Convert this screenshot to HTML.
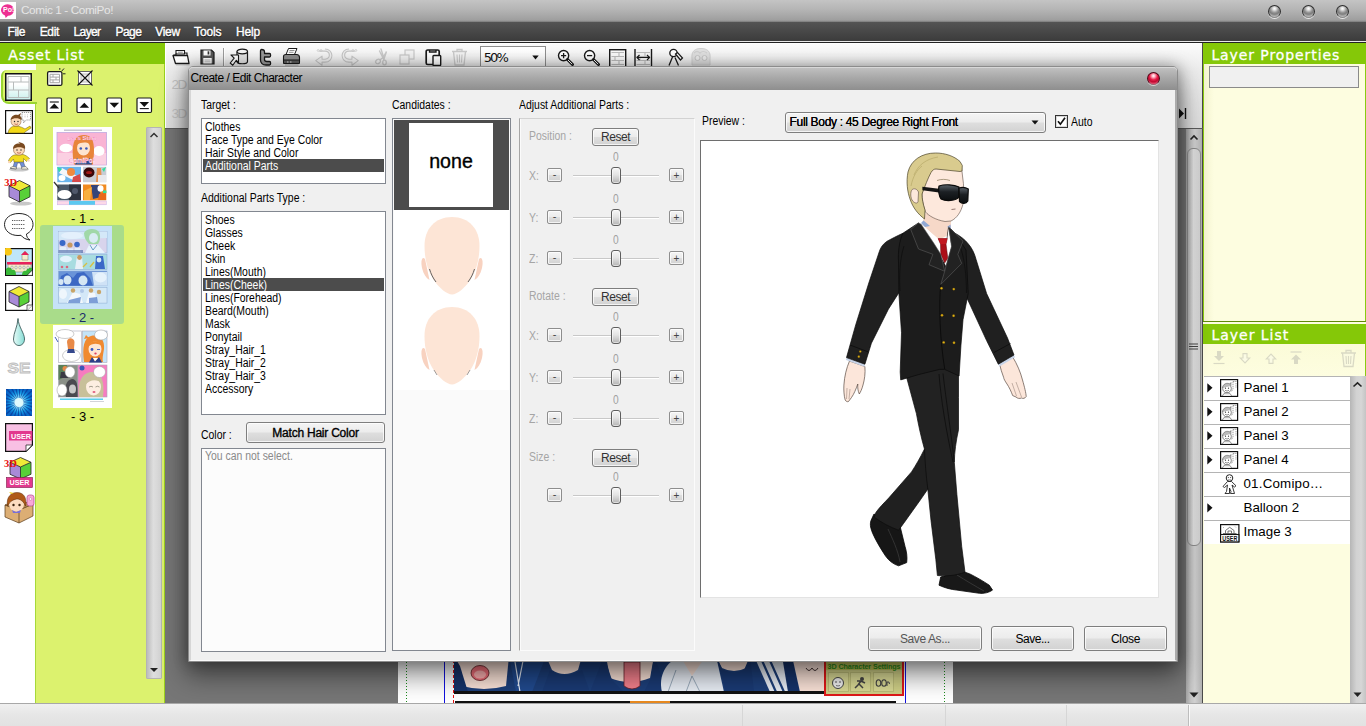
<!DOCTYPE html>
<html lang="en"><head><meta charset="utf-8"><title>Comic 1 - ComiPo!</title>
<style>
html,body{margin:0;padding:0}
body{width:1366px;height:726px;overflow:hidden;position:relative;background:#808080;font-family:"Liberation Sans",sans-serif}
div,span.t,svg.a{position:absolute;box-sizing:border-box}
span.t{white-space:pre;display:block}
.btn{border:1px solid #7e7e7e;border-radius:3px;background:linear-gradient(#f4f4f4 0%,#ececec 48%,#dedede 52%,#d2d2d2 100%);box-shadow:inset 0 0 0 1px rgba(255,255,255,.75)}
.lb{border:1px solid #828790;background:#fff}

</style></head>
<body>
<div style="left:0px;top:0px;width:1366px;height:22px;background:linear-gradient(#c4c4c4,#b4b4b4 45%,#9e9e9e 92%,#7a7a7a)"></div>
<div style="left:0px;top:2px;width:16px;height:17px;background:#fff"></div>
<svg class="a" style="left:0;top:2px" width="16" height="17" viewBox="0 0 17 18"><ellipse cx="8" cy="8.5" rx="7" ry="6.2" fill="#ee2f92"/><path d="M5 13 L6 17 L9 14Z" fill="#ee2f92"/><text x="3.2" y="11" font-family="Liberation Sans,sans-serif" font-size="7.5" font-weight="bold" fill="#fff">Po!</text></svg>
<span class="t" style="left:21px;top:4.91px;font:normal 11.8px 'Liberation Sans',sans-serif;line-height:1;color:#e6e6e6;letter-spacing:-0.411px;">Comic 1 - ComiPo!</span>
<div style="left:1268px;top:5px;width:13px;height:13px;border-radius:50%;background:radial-gradient(circle at 50% 24%,#fff 0%,#e4e4e4 14%,#9a9a9a 38%,#7c7c7c 55%,#b8b8b8 78%,#4a4a4a 100%);border:1px solid #2e2e2e;border-bottom-color:#8a8a8a;box-shadow:0 1px 0 rgba(255,255,255,.75)"></div>
<div style="left:1302px;top:5px;width:13px;height:13px;border-radius:50%;background:radial-gradient(circle at 50% 24%,#fff 0%,#e4e4e4 14%,#9a9a9a 38%,#7c7c7c 55%,#b8b8b8 78%,#4a4a4a 100%);border:1px solid #2e2e2e;border-bottom-color:#8a8a8a;box-shadow:0 1px 0 rgba(255,255,255,.75)"></div>
<div style="left:1336px;top:5px;width:13px;height:13px;border-radius:50%;background:radial-gradient(circle at 50% 24%,#fff 0%,#e4e4e4 14%,#9a9a9a 38%,#7c7c7c 55%,#b8b8b8 78%,#4a4a4a 100%);border:1px solid #2e2e2e;border-bottom-color:#8a8a8a;box-shadow:0 1px 0 rgba(255,255,255,.75)"></div>
<div style="left:0px;top:22px;width:1366px;height:20px;background:linear-gradient(#545454 0%,#474747 50%,#3a3a3a 100%)"></div>
<div style="left:0px;top:41px;width:1366px;height:2px;background:linear-gradient(#e8e8e8,#e8e8e8 50%,#222 50%)"></div>
<span class="t" style="left:7.6px;top:25.84px;font:normal 12px 'Liberation Sans',sans-serif;line-height:1;color:#fff;letter-spacing:-0.486px;-webkit-text-stroke:.4px #fff;text-shadow:0 1px 1px #000;">File</span>
<span class="t" style="left:39.7px;top:25.84px;font:normal 12px 'Liberation Sans',sans-serif;line-height:1;color:#fff;letter-spacing:-0.322px;-webkit-text-stroke:.4px #fff;text-shadow:0 1px 1px #000;">Edit</span>
<span class="t" style="left:73.5px;top:25.84px;font:normal 12px 'Liberation Sans',sans-serif;line-height:1;color:#fff;letter-spacing:-0.606px;-webkit-text-stroke:.4px #fff;text-shadow:0 1px 1px #000;">Layer</span>
<span class="t" style="left:115.5px;top:25.84px;font:normal 12px 'Liberation Sans',sans-serif;line-height:1;color:#fff;letter-spacing:-0.558px;-webkit-text-stroke:.4px #fff;text-shadow:0 1px 1px #000;">Page</span>
<span class="t" style="left:155.3px;top:25.84px;font:normal 12px 'Liberation Sans',sans-serif;line-height:1;color:#fff;letter-spacing:-0.324px;-webkit-text-stroke:.4px #fff;text-shadow:0 1px 1px #000;">View</span>
<span class="t" style="left:194px;top:25.84px;font:normal 12px 'Liberation Sans',sans-serif;line-height:1;color:#fff;letter-spacing:-0.103px;-webkit-text-stroke:.4px #fff;text-shadow:0 1px 1px #000;">Tools</span>
<span class="t" style="left:236px;top:25.84px;font:normal 12px 'Liberation Sans',sans-serif;line-height:1;color:#fff;letter-spacing:-0.172px;-webkit-text-stroke:.4px #fff;text-shadow:0 1px 1px #000;">Help</span>
<div style="left:0px;top:703px;width:1366px;height:23px;background:linear-gradient(#f0f0f0,#e6e6e6 50%,#e2e2e2);border-top:1px solid #a8a8a8"></div>
<div style="left:742px;top:705px;width:1px;height:21px;background:#d6d6d6"></div>
<div style="left:945px;top:705px;width:1px;height:21px;background:#d6d6d6"></div>
<div style="left:1066px;top:705px;width:1px;height:21px;background:#d6d6d6"></div>
<div style="left:1188px;top:705px;width:2px;height:21px;background:#fafafa;border-left:1px solid #bdbdbd"></div>
<div style="left:0px;top:43px;width:165px;height:660px;background:#dcf26e;border-left:1px solid #8acb10;border-right:1px solid #9bd11c"></div>
<div style="left:0px;top:43px;width:165px;height:21px;background:#85c808"></div>
<span class="t" style="left:8.3px;top:48.15px;font:normal 14px 'DejaVu Sans','Liberation Sans',sans-serif;line-height:1;color:#fff;letter-spacing:0.930px;-webkit-text-stroke:.3px #fff;">Asset List</span>
<div style="left:0px;top:64px;width:36px;height:639px;background:#fff"></div>
<div style="left:35px;top:104px;width:1px;height:599px;background:#a6d93a"></div>
<div style="left:1px;top:70px;width:36px;height:34px;background:#dcf26e;border-left:2px solid #9ad531;border-bottom:2px solid #9ad531;border-radius:6px 0 0 8px"></div>
<svg class="a" style="left:5px;top:73px" width="27" height="28" viewBox="0 0 27 28"><defs><linearGradient id="gpl" x1="0" y1="0" x2="0" y2="1"><stop offset=".4" stop-color="#fff"/><stop offset="1" stop-color="#c8f0ec"/></linearGradient></defs><rect x=".75" y=".75" width="25.5" height="26.5" fill="url(#gpl)" stroke="#111" stroke-width="1.5"/><path d="M3 3.5 H24 V24.5 H3Z M3 9 H24 M3 17 H24 M16 3.5 V9 M8.5 9 V17 M13.5 17 V24.5" fill="none" stroke="#b8bcbc" stroke-width="1"/></svg>
<svg class="a" style="left:5px;top:110px" width="28" height="24" viewBox="0 0 28 24"><rect x=".6" y=".6" width="26.8" height="22.8" fill="#fff" stroke="#111" stroke-width="1.2"/><path d="M3 23 C4 17 8 16 11 16 C15 16 18 18 20 19 L25 16 L26 18 L20 22 L19 23Z" fill="#f2d818" stroke="#6a5a10" stroke-width=".5"/><ellipse cx="11" cy="11.5" rx="5" ry="4.8" fill="#fbd9b8" stroke="#7a5030" stroke-width=".5"/><path d="M5.5 10 C6 5 11 4 13 5 L16 3 L15 6 C17 7 17 9 16.5 10 C14 8 9 7.5 5.5 10Z" fill="#7a4a20"/><circle cx="9.5" cy="11.5" r=".7" fill="#222"/><circle cx="13" cy="11.5" r=".7" fill="#222"/><path d="M9.5 13.8 Q11.3 15.2 13 13.8" stroke="#a03020" stroke-width=".6" fill="none"/><path d="M17 2.5 H25.5 V10 H21 L18.5 13 L19 10 H17Z" fill="#fff" stroke="#555" stroke-width=".6" stroke-dasharray="1.2 .8"/><path d="M20 4.5 V8 M22.5 4.5 V8" stroke="#999" stroke-width=".6" stroke-dasharray=".8 .8"/></svg>
<svg class="a" style="left:7px;top:141px" width="24" height="31" viewBox="0 0 24 31"><ellipse cx="12" cy="28.5" rx="10" ry="2" fill="#c8c8c8"/><path d="M8 19 L6 26 L3.5 27.5 L9 28 L10.5 22 L13 22 L15 27.5 L20.5 27.5 L18 25.5 L15.5 18Z" fill="#7090d8" stroke="#334" stroke-width=".4"/><path d="M3 27 L9.5 28 L9 26 L5.5 25.5Z M14.5 28 L21 28 L19 25.5 L15 26Z" fill="#f4f0e4" stroke="#443" stroke-width=".4"/><path d="M7 14 C4 15 2 18 1.5 20 L3.5 21.5 L6.5 18 L7 21 L16.5 21 L16.5 17.5 L19.5 20.5 L22.5 17.5 C20 15 18 14 16 13.5Z" fill="#f0dc20" stroke="#6a5a10" stroke-width=".5"/><ellipse cx="12" cy="9" rx="5.5" ry="5.2" fill="#fbd9b8" stroke="#7a5030" stroke-width=".5"/><path d="M6 8 C6 3 10 2 13 2.5 L11 .8 L15 2 C18 3 18.5 6 18 8 C15 5.5 9.5 5.5 6 8Z" fill="#7a4a20"/><circle cx="10" cy="9" r=".7" fill="#222"/><circle cx="14" cy="9" r=".7" fill="#222"/><path d="M10 11.5 Q12 13 14 11.5" stroke="#a03020" stroke-width=".6" fill="none"/><circle cx="2.2" cy="21" r="1.3" fill="#fbd9b8"/><circle cx="21.5" cy="19.5" r="1.3" fill="#fbd9b8"/></svg>
<svg class="a" style="left:3px;top:176px" width="32" height="30" viewBox="0 0 32 30"><ellipse cx="18" cy="27.5" rx="11" ry="2" fill="#c8c8c8"/><path d="M6 9.75 L16.5 4.5 L27 9.75 L16.5 15.0Z" fill="#f0ea38"/><path d="M6 9.75 L16.5 15.0 L16.5 26.0 L6 20.75Z" fill="#a88ad8"/><path d="M27 9.75 L16.5 15.0 L16.5 26.0 L27 20.75Z" fill="#58d038"/><path d="M6 9.75 L16.5 4.5 L27 9.75 L27 20.75 L16.5 26.0 L6 20.75Z M6 9.75 L16.5 15.0 L27 9.75 M16.5 15.0 V26.0" fill="none" stroke="#222" stroke-width=".8" stroke-linejoin="round"/><text x="1.2" y="10" font-family="Liberation Serif,serif" font-weight="bold" font-size="10.5" fill="#e81010">3D</text></svg>
<svg class="a" style="left:3px;top:212px" width="32" height="30" viewBox="0 0 32 30"><path d="M16 1.5 C7 1.5 1.5 6.5 1.5 12.5 C1.5 18.5 7 23.5 15 23.5 L18 23.3 C20 26 23 27.5 27 28 C24.5 26.5 23.5 24.5 23.5 22 C27.5 20 30 16.5 30 12.5 C30 6.5 25 1.5 16 1.5Z" fill="#fff" stroke="#222" stroke-width="1"/><path d="M9 8.5 H22 M9 12.5 H22 M9 16.5 H22" stroke="#555" stroke-width="1" stroke-dasharray="1 .8"/></svg>
<svg class="a" style="left:5px;top:248px" width="28" height="28" viewBox="0 0 28 28"><rect x=".6" y=".6" width="26.8" height="26.8" fill="#bfe6fa" stroke="#111" stroke-width="1.2"/><circle cx="3" cy="3.5" r="4" fill="#f8c818"/><path d="M15 12 H25 V17 H15Z" fill="#f4eccc"/><path d="M17 6 L20 3 L23 6 V12 H17Z" fill="#f4eccc" stroke="#554" stroke-width=".4"/><path d="M16 7 L20 3.2 L24 7Z" fill="#e8205a"/><path d="M3 16 H26 V24 H3Z" fill="#f4eccc" stroke="#554" stroke-width=".4"/><path d="M2 14 H27 V16.5 H2Z" fill="#e8205a"/><path d="M1 27 V21 C3 19 6 19 7 22 C9 21 11 22 11 27Z M27 27 V20 C24 19 22 20 21 23 C19 22 17 24 17 27Z" fill="#38b838"/><g fill="#fff" stroke="#555" stroke-width=".4"><rect x="6" y="18" width="2" height="3" rx="1"/><rect x="10" y="18" width="2" height="3" rx="1"/><rect x="14" y="18" width="2" height="3" rx="1"/><rect x="18" y="18" width="2" height="3" rx="1"/><rect x="22" y="18" width="2" height="3" rx="1"/></g><path d="M22 27.4 L27.4 22 V27.4Z" fill="#fff" stroke="#111" stroke-width=".6"/></svg>
<svg class="a" style="left:5px;top:283px" width="28" height="28" viewBox="0 0 28 28"><rect x=".6" y=".6" width="26.8" height="26.8" fill="#fff" stroke="#111" stroke-width="1.2"/><path d="M4 8.5 L14.0 3.5 L24 8.5 L14.0 13.5Z" fill="#f0ea38"/><path d="M4 8.5 L14.0 13.5 L14.0 24.0 L4 19.0Z" fill="#a88ad8"/><path d="M24 8.5 L14.0 13.5 L14.0 24.0 L24 19.0Z" fill="#58d038"/><path d="M4 8.5 L14.0 3.5 L24 8.5 L24 19.0 L14.0 24.0 L4 19.0Z M4 8.5 L14.0 13.5 L24 8.5 M14.0 13.5 V24.0" fill="none" stroke="#222" stroke-width=".8" stroke-linejoin="round"/><path d="M22 27.4 L27.4 22 V27.4Z" fill="#fff" stroke="#111" stroke-width=".6"/><path d="M22 27.4 V22 H27.4" fill="#eee" stroke="#111" stroke-width=".6"/></svg>
<svg class="a" style="left:12px;top:318px" width="14" height="28" viewBox="0 0 14 28"><defs><linearGradient id="gdr" x1="0" y1="0" x2="1" y2="0"><stop offset="0" stop-color="#e8fbf8"/><stop offset="1" stop-color="#86dcd4"/></linearGradient></defs><path d="M6 .5 C6.5 9 12.5 15 12.5 21 C12.5 25 10 27.5 7 27.5 C4 27.5 1.5 25 1.5 21 C1.5 15 5.5 9 6 .5Z" fill="url(#gdr)" stroke="#2a4a4a" stroke-width=".8"/></svg>
<svg class="a" style="left:6px;top:358px" width="26" height="18" viewBox="0 0 26 18"><text x="1.5" y="15" font-family="Liberation Sans,sans-serif" font-weight="bold" font-size="15.5" fill="#e6e6e6" stroke="#c0c0c0" stroke-width=".9" textLength="23" lengthAdjust="spacingAndGlyphs">SE</text></svg>
<svg class="a" style="left:6px;top:389px" width="26" height="27" viewBox="0 0 26 27"><defs><radialGradient id="gfl"><stop offset="0" stop-color="#fff"/><stop offset=".3" stop-color="#a8f0ff"/><stop offset=".7" stop-color="#18a0e8"/><stop offset="1" stop-color="#0868c8"/></radialGradient><clipPath id="cfl"><rect width="26" height="27"/></clipPath></defs><rect width="26" height="27" fill="url(#gfl)"/><g clip-path="url(#cfl)" opacity=".75"><path d="M13 13.5 L43.0 13.5 L42.9 16.5Z" fill="#0a3a9a"/><path d="M13 13.5 L42.0 21.3 L41.1 24.1Z" fill="#0a3a9a"/><path d="M13 13.5 L39.0 28.5 L37.4 31.0Z" fill="#0a3a9a"/><path d="M13 13.5 L34.2 34.7 L32.0 36.7Z" fill="#0a3a9a"/><path d="M13 13.5 L28.0 39.5 L25.3 40.8Z" fill="#0a3a9a"/><path d="M13 13.5 L20.8 42.5 L17.8 43.1Z" fill="#0a3a9a"/><path d="M13 13.5 L13.0 43.5 L10.0 43.4Z" fill="#0a3a9a"/><path d="M13 13.5 L5.2 42.5 L2.4 41.6Z" fill="#0a3a9a"/><path d="M13 13.5 L-2.0 39.5 L-4.5 37.9Z" fill="#0a3a9a"/><path d="M13 13.5 L-8.2 34.7 L-10.2 32.5Z" fill="#0a3a9a"/><path d="M13 13.5 L-13.0 28.5 L-14.3 25.8Z" fill="#0a3a9a"/><path d="M13 13.5 L-16.0 21.3 L-16.6 18.3Z" fill="#0a3a9a"/><path d="M13 13.5 L-17.0 13.5 L-16.9 10.5Z" fill="#0a3a9a"/><path d="M13 13.5 L-16.0 5.7 L-15.1 2.9Z" fill="#0a3a9a"/><path d="M13 13.5 L-13.0 -1.5 L-11.4 -4.0Z" fill="#0a3a9a"/><path d="M13 13.5 L-8.2 -7.7 L-6.0 -9.7Z" fill="#0a3a9a"/><path d="M13 13.5 L-2.0 -12.5 L0.7 -13.8Z" fill="#0a3a9a"/><path d="M13 13.5 L5.2 -15.5 L8.2 -16.1Z" fill="#0a3a9a"/><path d="M13 13.5 L13.0 -16.5 L16.0 -16.4Z" fill="#0a3a9a"/><path d="M13 13.5 L20.8 -15.5 L23.6 -14.6Z" fill="#0a3a9a"/><path d="M13 13.5 L28.0 -12.5 L30.5 -10.9Z" fill="#0a3a9a"/><path d="M13 13.5 L34.2 -7.7 L36.2 -5.5Z" fill="#0a3a9a"/><path d="M13 13.5 L39.0 -1.5 L40.3 1.2Z" fill="#0a3a9a"/><path d="M13 13.5 L42.0 5.7 L42.6 8.7Z" fill="#0a3a9a"/></g><circle cx="13" cy="13.5" r="4.5" fill="#e8ffff" opacity=".9"/></svg>
<svg class="a" style="left:5px;top:423px" width="28" height="29" viewBox="0 0 28 29"><path d="M.6 .6 H27.4 V22 L21 28.4 H.6Z" fill="#f8c0e4" stroke="#111" stroke-width="1.2"/><path d="M21 28.4 V22 H27.4Z" fill="#fff" stroke="#111" stroke-width=".7"/><rect x="4" y="8" width="23.4" height="9.5" fill="#e2388e"/><text x="6" y="15.6" font-family="Liberation Sans,sans-serif" font-weight="bold" font-size="8" fill="#fff" textLength="20" lengthAdjust="spacingAndGlyphs">USER</text></svg>
<svg class="a" style="left:3px;top:455px" width="32" height="34" viewBox="0 0 32 34"><path d="M7 7.25 L17.5 2.5 L28 7.25 L17.5 12.0Z" fill="#f0ea38"/><path d="M7 7.25 L17.5 12.0 L17.5 24.0 L7 19.25Z" fill="#a88ad8"/><path d="M28 7.25 L17.5 12.0 L17.5 24.0 L28 19.25Z" fill="#58d038"/><path d="M7 7.25 L17.5 2.5 L28 7.25 L28 19.25 L17.5 24.0 L7 19.25Z M7 7.25 L17.5 12.0 L28 7.25 M17.5 12.0 V24.0" fill="none" stroke="#222" stroke-width=".8" stroke-linejoin="round"/><rect x="3.5" y="22.5" width="26" height="10" fill="#e2388e"/><text x="6.5" y="30.4" font-family="Liberation Sans,sans-serif" font-weight="bold" font-size="8" fill="#fff" textLength="20" lengthAdjust="spacingAndGlyphs">USER</text><rect x="3.5" y="22.5" width="26" height="10" fill="none" stroke="#7a1848" stroke-width=".6"/><text x="1" y="11.5" font-family="Liberation Serif,serif" font-weight="bold" font-size="10.5" fill="#e81010">3D</text></svg>
<svg class="a" style="left:3px;top:491px" width="32" height="33" viewBox="0 0 32 33"><path d="M2 14 L16 19 L30 13 L30 25 L16 32 L2 26Z" fill="#dcae74" stroke="#5a3a18" stroke-width=".7"/><path d="M16 19 V32" stroke="#5a3a18" stroke-width=".7"/><path d="M2 14 L14 9 L30 13 L16 19Z" fill="#b88850" stroke="#5a3a18" stroke-width=".6"/><ellipse cx="13.5" cy="13.5" rx="7.5" ry="7" fill="#fbdcc0"/><path d="M4.500 15 C3 6 8 1.500 14 1.500 C21 1.500 24 7 22.500 15 C21 11 18 8.500 15 8 C11 8 7 10 4.500 15Z" fill="#b05a18" stroke="#5a2a08" stroke-width=".5"/><path d="M8 3 L6 1 L11 2Z" fill="#f0d020"/><circle cx="10.5" cy="14" r="1.2" fill="#3a2410"/><circle cx="16.5" cy="14" r="1.2" fill="#3a2410"/><path d="M9 19 L13 21 L18 19 L17 22 L10 22Z" fill="#7a70d8"/><rect x="24" y="4" width="7" height="11" rx="2.5" fill="#f8a8d8" stroke="#b04890" stroke-width=".7"/><circle cx="27.5" cy="8" r="1.3" fill="#fff" stroke="#b04890" stroke-width=".4"/></svg>
<svg class="a" style="left:46px;top:66px" width="22" height="21" viewBox="0 0 22 21"><rect x="1.600" y="5.600" width="14.300" height="13.800" rx="1.500" fill="#fff" stroke="#1a1a1a" stroke-width="1.300"/><path d="M4 8.300 H13.500 V16.700 H4Z M4 11.100 H13.500 M4 13.900 H13.500 M7 8.300 V11.100 M10 11.100 V13.900 M7 13.900 V16.700" fill="none" stroke="#a8a8a8" stroke-width="1"/><path d="M15.800 5 L18 2.500 M17 7.800 L19.500 7.800 M13.800 3.800 L13.800 2" stroke="#222" stroke-width="1"/></svg>
<svg class="a" style="left:76px;top:69px" width="18" height="18" viewBox="0 0 18 18"><rect x="2.500" y="2.500" width="13" height="13" fill="#fff" stroke="#666" stroke-width="1"/><rect x="5" y="5" width="8" height="8" fill="#eee" stroke="#aaa" stroke-width=".8"/><path d="M1.500 1.500 L16.500 16.500 M16.500 1.500 L1.500 16.500" stroke="#111" stroke-width="1.100"/></svg>
<svg class="a" style="left:46px;top:97px" width="17" height="17" viewBox="0 0 17 17"><rect x="1" y="1" width="14.500" height="14.500" rx="1.200" fill="#fff" stroke="#1a1a1a" stroke-width="1.200"/><path transform="translate(.3,.3)" d="M3.500 4.700 H12.500" stroke="#111" stroke-width="1.100"/><path transform="translate(.3,.3)" d="M3.200 11.300 L8 6.300 L12.800 11.300Z" fill="#111"/></svg>
<svg class="a" style="left:76px;top:97px" width="17" height="17" viewBox="0 0 17 17"><rect x="1" y="1" width="14.500" height="14.500" rx="1.200" fill="#fff" stroke="#1a1a1a" stroke-width="1.200"/><path transform="translate(.3,.3)" d="M3.200 10.500 L8 5.500 L12.800 10.500Z" fill="#111"/></svg>
<svg class="a" style="left:106px;top:97px" width="17" height="17" viewBox="0 0 17 17"><rect x="1" y="1" width="14.500" height="14.500" rx="1.200" fill="#fff" stroke="#1a1a1a" stroke-width="1.200"/><path transform="translate(.3,.3)" d="M3.200 5.500 L8 10.500 L12.800 5.500Z" fill="#111"/></svg>
<svg class="a" style="left:136px;top:97px" width="17" height="17" viewBox="0 0 17 17"><rect x="1" y="1" width="14.500" height="14.500" rx="1.200" fill="#fff" stroke="#1a1a1a" stroke-width="1.200"/><path transform="translate(.3,.3)" d="M3.500 11.300 H12.500" stroke="#111" stroke-width="1.100"/><path transform="translate(.3,.3)" d="M3.200 4.700 L8 9.700 L12.800 4.700Z" fill="#111"/></svg>
<div style="left:146px;top:127px;width:16px;height:552px;background:linear-gradient(90deg,#bcbcbc,#dedede 45%,#d2d2d2);border:1px solid #b4b4b4;border-radius:1px"></div>
<svg class="a" style="left:148px;top:131px" width="12" height="8" viewBox="0 0 12 8"><path d="M2.500 6 L6 2.500 L9.500 6" fill="none" stroke="#333" stroke-width="1.500"/></svg>
<svg class="a" style="left:149px;top:667px" width="10" height="6" viewBox="0 0 10 6"><path d="M1 1 H9 L5 5Z" fill="#222"/></svg>
<svg class="a" style="left:53px;top:127px" width="59" height="83" viewBox="0 0 59 83"><rect width="59" height="83" fill="#fff"/><rect x="11" y="2.500" width="38" height="1.500" fill="#c8c8d0"/>
<rect x="4" y="5.500" width="49.500" height="32.500" fill="#f9b4d4" stroke="#c0a8e0" stroke-width=".8"/><rect x="4.400" y="26" width="48.700" height="11.600" fill="#fbd0e2"/>
<ellipse cx="13" cy="21" rx="6.500" ry="4.300" fill="#fff"/><ellipse cx="46" cy="24" rx="5.500" ry="5" fill="#fff"/>
<path d="M21 37.500 C19 28 19 16 23 11 C27 7 36 7 39 12 C42 18 41 28 40 37.500Z" fill="#e8853a"/><ellipse cx="30.500" cy="21" rx="6.500" ry="7.500" fill="#fde4d0"/><path d="M24 18 C26 12 34 11 37 17 C33 15 28 15 24 18Z" fill="#e8853a"/><circle cx="27.800" cy="21.500" r="1.300" fill="#3858b8"/><circle cx="33.400" cy="21.500" r="1.300" fill="#3858b8"/><path d="M24 31 L30.500 36 L37 31 L39 37.500 H22Z" fill="#2c4a8c"/>
<text x="28.700" y="13" text-anchor="middle" font-family="Liberation Sans,sans-serif" font-weight="bold" font-size="6" fill="#fff" stroke="#f36ab0" stroke-width=".25">Let's Start</text>
<text x="28.700" y="35.500" text-anchor="middle" font-family="Liberation Sans,sans-serif" font-weight="bold" font-size="6.400" fill="#f35aaa" stroke="#fff" stroke-width=".35">ComiPo!</text>
<rect x="4.300" y="39.800" width="23.700" height="15.400" fill="#6ab4ec"/><path d="M9 41 L26 50 L24 55 L6 46Z" fill="#f4f6fa"/><circle cx="18" cy="45" r="4" fill="#ee8a40"/><ellipse cx="9" cy="51" rx="3.500" ry="3" fill="#fff"/><path d="M20 50 L27 47 L28 55 L19 55Z" fill="#d84a4a"/>
<rect x="30" y="39.800" width="23.300" height="15.400" fill="#c8ccd4"/><ellipse cx="36" cy="45.500" rx="5.500" ry="5" fill="#3a0808"/><ellipse cx="36" cy="45.500" rx="3" ry="1.600" fill="#a01818"/><path d="M44 41 L48 41 L49 55 L43 55Z" fill="#e89050"/><rect x="45" y="48" width="8" height="7" fill="#e8e8ec"/>
<path d="M4 40 L9 42 L6 45Z M53 40 L49 42 L51 45Z" fill="#30e0a0"/>
<rect x="4.300" y="57.500" width="23.700" height="15.800" fill="#4a5868"/><path d="M16 57.500 H28 V73.300 H16Z" fill="#2e3440"/><circle cx="22" cy="64" r="3" fill="#50586a"/><ellipse cx="11.500" cy="67.500" rx="7" ry="4.500" fill="#fff"/><path d="M1 55 L6 61" stroke="#333" stroke-width="1.200"/>
<rect x="30" y="57.500" width="23.300" height="15.800" fill="#f08a20"/><path d="M38 58 L46 58 L48 70 L40 72Z" fill="#34447a"/><path d="M31 64 L39 60 L37 73 L31 73Z" fill="#f8b040"/><ellipse cx="47.500" cy="61.500" rx="3" ry="3.300" fill="#fff"/><path d="M46 67 L53 65 V73 H45Z" fill="#e86a18"/><rect x="50" y="63.500" width="3.500" height="2.600" fill="#30e0a0"/>
<rect x="4.300" y="74" width="49" height="3.800" fill="#fcd8e8" stroke="#c8b0e8" stroke-width=".5"/><rect x="16" y="74" width="26" height="3.800" fill="#5cc8f0"/></svg>
<span class="t" style="left:71.04px;top:211.50px;font:normal 13px 'Liberation Sans',sans-serif;line-height:1;color:#000;">- 1 -</span>
<div style="left:40px;top:225px;width:84px;height:99px;background:#a9dc8a;border-radius:3px"></div>
<svg class="a" style="left:53px;top:226px" width="59" height="83" viewBox="0 0 59 83"><rect width="59" height="83" fill="#c6e2f8"/>
<rect x="5.500" y="5.500" width="48.500" height="21.500" fill="#d8d4ec" stroke="#8aa8d0" stroke-width=".5"/><path d="M5.500 14 L54 12 V5.500 H5.500Z" fill="#d4e8f8"/><ellipse cx="19" cy="9.500" rx="11" ry="3.600" fill="#e4f0fc"/>
<path d="M31 7 C33 2 43 1.500 46 6 C48 10 47 15 45 18 L36 18 C33 15 31 11 31 7Z" fill="#a0d8a8"/><ellipse cx="40.500" cy="12" rx="4.500" ry="5" fill="#d8ecf4"/><path d="M32 27 L36 19 L45 19 L52 27Z" fill="#e8f2fc"/><path d="M37 19 L40 24 L44 19" fill="none" stroke="#4a88b8" stroke-width=".8"/>
<circle cx="9.500" cy="17" r="3" fill="#3a68c8"/><circle cx="17" cy="19" r="2.600" fill="#c89860"/><circle cx="24" cy="18.500" r="2.800" fill="#3a68c8"/><path d="M6 27 L7 21 H13 L14 27Z M14 27 L15 22.500 H20 L21 27Z M21 27 L22 22 H27 L28 27Z" fill="#e4eefa"/><path d="M5.500 24 H30 V27 H5.500Z" fill="#3a5a9c" opacity=".55"/>
<rect x="5.500" y="28.700" width="48.500" height="14.600" fill="#a8dce0" stroke="#8aa8d0" stroke-width=".5"/><ellipse cx="13" cy="33" rx="6" ry="3.200" fill="#e4f2fc"/><path d="M24 30 L29 30 L30 43 L22 43Z" fill="#e8f0f8"/><circle cx="26.500" cy="31.500" r="2.400" fill="#c89860"/><path d="M43 30 L50 30 L52 43 L42 43Z" fill="#3a68c8"/><circle cx="46" cy="34" r="2.400" fill="#d8ecf4"/><path d="M30 41 L34 37 M37 41 L41 36" stroke="#d8c040" stroke-width="1.300"/><circle cx="9" cy="41" r="1.300" fill="#d86880"/><circle cx="14" cy="41" r="1.300" fill="#d86880"/>
<rect x="5.500" y="45" width="48.500" height="14.800" fill="#6a94d8" stroke="#8aa8d0" stroke-width=".5"/><path d="M5.500 59.800 L8 50 L14 47 L20 52 L24 47 L31 46 L37 52 L40 59.800Z" fill="#3c68c4"/><ellipse cx="14.500" cy="54" rx="4" ry="4.500" fill="#d4e6f4"/><ellipse cx="30" cy="54.500" rx="4.500" ry="5" fill="#d4e6f4"/><ellipse cx="8" cy="56" rx="2.500" ry="3" fill="#d4e6f4"/><path d="M39 46 H54 V59.800 H41Z" fill="#cfe2f6"/><ellipse cx="47.500" cy="51.500" rx="6" ry="5" fill="#e6f2fc"/>
<rect x="5.500" y="61.300" width="48.500" height="15.800" fill="#d4e8f8" stroke="#8aa8d0" stroke-width=".5"/><ellipse cx="10" cy="68" rx="4" ry="5" fill="#eef6fc"/><path d="M14 77 L20 66 L27 68 L30 77Z M33 77 L36 66 L42 67 L44 77Z" fill="#f4f8fc"/><circle cx="20" cy="64.500" r="2.200" fill="#c8a468"/><circle cx="29" cy="65" r="2" fill="#b0c8e8"/><circle cx="38" cy="64.500" r="2.200" fill="#c8a468"/><circle cx="46" cy="66" r="2.200" fill="#c8a468"/><path d="M16 74 L28 71 L27 77 H15Z M36 72 L44 71 L45 77 H36Z" fill="#4a78c8" opacity=".7"/></svg>
<span class="t" style="left:71.04px;top:310.50px;font:normal 13px 'Liberation Sans',sans-serif;line-height:1;color:#1a2a6a;">- 2 -</span>
<svg class="a" style="left:53px;top:325px" width="59" height="83" viewBox="0 0 59 83"><rect width="59" height="83" fill="#fff"/>
<rect x="5.500" y="6" width="22.800" height="31.500" fill="#fff" stroke="#a8a8b8" stroke-width=".6"/><ellipse cx="12" cy="9" rx="9" ry="4.500" fill="#fff" stroke="#999" stroke-width=".5"/><ellipse cx="18.500" cy="30.500" rx="9" ry="6" fill="#fff" stroke="#999" stroke-width=".5"/><path d="M14 17 C14 12 21 12 21.500 17 L21 24 L15 24Z" fill="#e88a48"/><path d="M15 24 L21 24 L22 28 L14 28Z" fill="#34488c"/><path d="M2 12 L5 17" stroke="#4060c0" stroke-width="1"/>
<rect x="29.500" y="6" width="24.500" height="31.500" fill="#c4e4f8" stroke="#a8a8b8" stroke-width=".6"/><path d="M31 37 C29 22 31 13 38 11 C46 9 52 14 51 24 C50 30 49 34 50 37Z" fill="#f08a30"/><path d="M31 14 L33 10 L36 13Z" fill="#f08a30"/><ellipse cx="42" cy="24" rx="6.500" ry="7.500" fill="#fde6d4"/><path d="M35 22 C37 15 46 14 49 21 C45 18 39 18 35 22Z" fill="#f08a30"/><circle cx="39" cy="24.500" r="1.400" fill="#3858c0"/><path d="M44 24.500 H47" stroke="#3858c0" stroke-width=".9"/><ellipse cx="42.500" cy="28.500" rx="1.200" ry=".9" fill="#e04060"/><path d="M36 37.500 L39 32 L42 36 L46 32 L49 37.500Z" fill="#2c3f88"/><path d="M40 33 L42 36.500 L45 33" fill="#fff"/><ellipse cx="48" cy="10" rx="6.500" ry="5" fill="#fff" stroke="#999" stroke-width=".5"/>
<rect x="5.500" y="40" width="19.500" height="32" fill="#8a9088" stroke="#a8a8b8" stroke-width=".6"/><path d="M5.500 40 H14 L12 52 L5.500 55Z" fill="#5a8058"/><circle cx="12" cy="43.500" r="2.500" fill="#e88a48"/><path d="M8 47 H16 L17 53 H7Z" fill="#3a3a44"/><path d="M13 72 C11 62 13 55 19 54 C24 54 25 60 25 72Z" fill="#4a4a50"/><ellipse cx="19.500" cy="64" rx="3.500" ry="4.500" fill="#c8c8c8"/><ellipse cx="17" cy="47" rx="5" ry="5.500" fill="#fff" stroke="#999" stroke-width=".5"/><ellipse cx="9" cy="65" rx="5" ry="6" fill="#fff" stroke="#999" stroke-width=".5"/>
<rect x="25" y="40" width="29" height="32" fill="#f77cc0" stroke="#a8a8b8" stroke-width=".6"/><path d="M26 72 C24 56 30 47 39 47 C48 47 52 56 50 72Z" fill="#c8c09a"/><ellipse cx="40.500" cy="62" rx="7.500" ry="8.500" fill="#fdeee2"/><path d="M32 60 C34 50 46 49 49 58 C44 54 37 54 32 60Z" fill="#c8c09a"/><path d="M36 62 Q38 60.500 40 62 M42.500 62 Q44.500 60.500 46.500 62" stroke="#665" stroke-width=".6" fill="none"/><ellipse cx="41" cy="67" rx="1.500" ry="1" fill="#e06080"/><ellipse cx="46.500" cy="47" rx="6" ry="5.500" fill="#fff" stroke="#999" stroke-width=".5"/><circle cx="29" cy="43" r="2.500" fill="#3a58b8"/>
<rect x="7" y="73.500" width="43" height="1.400" fill="#48c8e8"/><rect x="37" y="76" width="14" height=".8" fill="#c8c8d0"/></svg>
<span class="t" style="left:71.04px;top:409.50px;font:normal 13px 'Liberation Sans',sans-serif;line-height:1;color:#000;">- 3 -</span>
<div style="left:165px;top:43px;width:1038px;height:86px;background:linear-gradient(#fbfbfb,#ededed 30%,#dcdcdc 100%)"></div>
<div style="left:165px;top:43px;width:1px;height:86px;background:#fff"></div>
<div style="left:166px;top:43px;width:1037px;height:1px;background:#fdfdfd"></div>
<div style="left:1202px;top:43px;width:1px;height:660px;background:#4a4a4a"></div>
<span class="t" style="left:171.4px;top:78.17px;font:normal 13.5px 'Liberation Sans',sans-serif;line-height:1;color:#c4c4c4;letter-spacing:-1.333px;">2D</span>
<span class="t" style="left:171.4px;top:106.77px;font:normal 13.5px 'Liberation Sans',sans-serif;line-height:1;color:#c4c4c4;letter-spacing:-1.333px;">3D</span>
<div style="left:165px;top:129px;width:1021px;height:574px;background:#767676"></div>
<div style="left:165px;top:128px;width:1038px;height:1px;background:#5a5a5a"></div>
<div style="left:398px;top:140px;width:555px;height:563px;background:#fff"></div>
<div style="left:406px;top:140px;width:1px;height:563px;background:repeating-linear-gradient(#1a8a1a 0 1px,#fff 1px 3px)"></div>
<div style="left:944px;top:140px;width:1px;height:563px;background:repeating-linear-gradient(#1a8a1a 0 1px,#fff 1px 3px)"></div>
<div style="left:444px;top:140px;width:1px;height:563px;background:#1010e0"></div>
<div style="left:905px;top:140px;width:1px;height:563px;background:#1010e0"></div>
<div style="left:453px;top:140px;width:1px;height:563px;background:repeating-linear-gradient(#e01010 0 3px,#fff 3px 5px)"></div>
<svg class="a" style="left:454px;top:656px" width="372" height="38" viewBox="0 0 372 38"><rect width="372" height="38" fill="#1d3f7a"/>
<path d="M0 0 H55 L52 30 Q30 36 8 30Z" fill="#fbe3d8"/><path d="M0 0 V36 H14 L6 10Z" fill="#16336a"/><ellipse cx="26" cy="17" rx="9" ry="7.500" fill="#f0707a" stroke="#5a1a20" stroke-width=".8"/><ellipse cx="26" cy="18.500" rx="6" ry="4" fill="#fbb0b0"/><path d="M20 2 H28 M36 3 H44" stroke="#223" stroke-width="1.300"/>
<path d="M55 0 L62 36 H78 L92 0Z" fill="#214a8e"/><path d="M60 0 L66 36 M70 0 L64 30" stroke="#e8eef8" stroke-width="1.200"/>
<path d="M92 0 H128 L124 14 Q110 22 98 14Z" fill="#fbe3d8"/><path d="M96 14 L88 36 H136 L128 14 Q110 24 96 14Z" fill="#1a3a74"/>
<path d="M152 0 H200 L196 22 Q176 30 156 22Z" fill="#fbe3d8"/><path d="M170 6 H186 V30 Q178 36 170 30Z" fill="#f4808c" stroke="#6a2028" stroke-width=".8"/><path d="M136 36 L150 0 L158 24 L170 36Z M200 0 L214 36 H190 L197 22Z" fill="#1a3a74"/>
<path d="M208 36 C204 20 212 6 226 0 H262 L270 36Z" fill="#e9eef6"/><path d="M226 0 L238 20 L252 0Z" fill="#fbe3d8"/><path d="M214 36 L222 14 M232 36 L238 20 L246 36" stroke="#9ab" stroke-width="1" fill="none"/>
<path d="M262 0 L296 0 L292 12 Q280 18 268 12Z" fill="#fbe3d8"/><path d="M262 0 L272 36 H300 L296 0 L290 14 Q280 20 268 13Z" fill="#1a3a74"/>
<path d="M300 0 L316 36 H350 L340 0Z" fill="#e9eef6"/><path d="M306 0 L322 36 M314 0 L330 36" stroke="#1d3f7a" stroke-width="2.200"/>
<path d="M338 0 H372 V36 H346Z" fill="#fbe3d8"/><path d="M352 12 Q355 17 358 12 Q361 17 364 12" stroke="#433" stroke-width="1" fill="none"/><path d="M338 0 L346 36 H334 L328 0Z" fill="#16336a"/>
<rect x="0" y="35" width="372" height="3" fill="#111"/></svg>
<div style="left:455px;top:701px;width:441px;height:2px;background:#111"></div>
<div style="left:630px;top:701px;width:40px;height:2px;background:#e88a20"></div>
<div style="left:824px;top:656px;width:80px;height:40px;background:#cfcf86;border:2px solid #e01818"></div>
<div style="left:826px;top:660px;width:76px;height:10px;background:#bcc058"></div>
<span class="t" style="left:827.5px;top:662.51px;font:bold 7.2px 'Liberation Sans',sans-serif;line-height:1;color:#2a8a18;letter-spacing:-0.100px;">3D Character Settings</span>
<div style="left:828px;top:672px;width:21px;height:20px;background:#d8d894;border:1px solid #bcbc78"></div>
<div style="left:850px;top:672px;width:21px;height:20px;background:#d8d894;border:1px solid #bcbc78"></div>
<div style="left:873px;top:672px;width:21px;height:20px;background:#d8d894;border:1px solid #bcbc78"></div>
<svg class="a" style="left:831px;top:676px" width="14" height="14" viewBox="0 0 14 14"><circle cx="7" cy="7" r="5.500" fill="#eee" stroke="#444" stroke-width="1"/><circle cx="5" cy="6" r=".8" fill="#444"/><circle cx="9" cy="6" r=".8" fill="#444"/><path d="M5 9.500 Q7 10.500 9 9.500" stroke="#444" stroke-width=".7" fill="none"/></svg>
<svg class="a" style="left:853px;top:676px" width="14" height="14" viewBox="0 0 14 14"><circle cx="9" cy="3" r="2" fill="#444"/><path d="M8 5 L5 9 L2 12 M6 8 L10 12 M8 5 L4 5 M8 5 L12 7" stroke="#444" stroke-width="1.500" fill="none"/></svg>
<svg class="a" style="left:875px;top:678px" width="16" height="10" viewBox="0 0 16 10"><ellipse cx="3.500" cy="5" rx="2.300" ry="3.300" fill="none" stroke="#444" stroke-width="1.100"/><ellipse cx="9" cy="5" rx="2.300" ry="3.300" fill="none" stroke="#444" stroke-width="1.100"/><path d="M12 8 V4 Q14.500 3 14.500 6" fill="none" stroke="#444" stroke-width="1"/></svg>
<div style="left:1186px;top:129px;width:16px;height:574px;background:linear-gradient(90deg,#a2a2a2,#c4c4c4 30%,#d0d0d0 55%,#b2b2b2)"></div>
<div style="left:1187px;top:148px;width:14px;height:398px;background:linear-gradient(90deg,#b4b4b4,#e0e0e0 45%,#cfcfcf);border:1px solid #8a8a8a;border-radius:6px"></div>
<svg class="a" style="left:1189px;top:343px" width="9" height="7" viewBox="0 0 9 7"><path d="M0 1 H9 M0 3.500 H9 M0 6 H9" stroke="#444" stroke-width="1"/></svg>
<svg class="a" style="left:1189px;top:134px" width="10" height="7" viewBox="0 0 10 7"><path d="M1.500 5.500 L5 2 L8.500 5.500" fill="none" stroke="#222" stroke-width="1.600"/></svg>
<svg class="a" style="left:1189px;top:692px" width="10" height="6" viewBox="0 0 10 6"><path d="M.5 .5 H9.500 L5 5.500Z" fill="#222"/></svg>
<svg class="a" style="left:1179px;top:108px" width="8" height="11" viewBox="0 0 8 11"><path d="M0 .5 L5 5.500 L0 10.500Z" fill="#111"/><path d="M6.500 0 V11" stroke="#111" stroke-width="1.400"/></svg>
<svg class="a" style="left:172px;top:48px" width="19" height="18" viewBox="0 0 19 18"><path d="M4 2.500 H12.500 V6 H4Z" fill="#fff" stroke="#1a1a1a" stroke-width="1.100"/><path d="M5.800 4.200 H10.800" stroke="#888" stroke-width="1"/><path d="M1.500 7 H4 V5.500 M12.500 5 H15 V8" fill="none" stroke="#1a1a1a" stroke-width="1.100"/><path d="M1 7.500 H15.500 L17 15.500 H3.500Z" fill="#fff" stroke="#1a1a1a" stroke-width="1.300" stroke-linejoin="round"/><path d="M4 16.800 H17.500" stroke="#aaa" stroke-width="1"/></svg>
<svg class="a" style="left:200px;top:49px" width="15" height="16" viewBox="0 0 15 16"><path d="M1 1 H11.500 L14 3.500 V15 H1Z" fill="#555" stroke="#1a1a1a" stroke-width="1.200"/><rect x="3.500" y="1.500" width="7" height="5" fill="#fff"/><rect x="7.600" y="2.300" width="1.700" height="3.200" fill="#333"/><rect x="3.300" y="9" width="8.400" height="5.500" fill="#fff"/><path d="M4.500 11 H10.500 M4.500 12.800 H10.500" stroke="#999" stroke-width=".7"/></svg>
<div style="left:223px;top:48px;width:1px;height:18px;background:#9c9c9c"></div>
<div style="left:224px;top:48px;width:1px;height:18px;background:#fff"></div>
<svg class="a" style="left:229px;top:47px" width="20" height="20" viewBox="0 0 20 20"><path d="M8 4.500 V14.500 C8 17.500 18.500 17.500 18.500 14.500 V4.500" fill="#e4e4e4" stroke="#1a1a1a" stroke-width="1.200"/><ellipse cx="13.250" cy="4.500" rx="5.250" ry="2.300" fill="#f4f4f4" stroke="#1a1a1a" stroke-width="1.200"/><path d="M2 8 H9.500 V15.500 L7.300 13.300 L3.800 18.300 L1.200 16 L5.200 11.200 L2 8Z" fill="#fff" stroke="#1a1a1a" stroke-width="1.100" stroke-linejoin="round"/></svg>
<svg class="a" style="left:259px;top:48px" width="14" height="18" viewBox="0 0 14 18"><path d="M2.500 1.500 C4.500 1.500 5.500 2.500 5.500 4 V5.500 H10.500 C12 5.500 12 9 10.500 9 H5.500 V11.500 C5.500 13 6.500 13.500 8 13.500 H10.500 C12 13.500 12 17 10.500 17 H7 C3.500 17 1.500 15 1.500 12 V3 C1.500 2 2 1.500 2.500 1.500Z" fill="#9a9a9a" stroke="#1a1a1a" stroke-width="1.300" stroke-linejoin="round"/></svg>
<svg class="a" style="left:282px;top:47px" width="19" height="19" viewBox="0 0 19 19"><path d="M6.500 1.500 H15 L12.500 7.500 H4Z" fill="#fff" stroke="#1a1a1a" stroke-width="1"/><path d="M7.500 3.500 H12.500 M6.800 5.300 H11.500" stroke="#777" stroke-width=".8"/><path d="M1.500 9.500 C1.500 8 3 7.500 4 7.500 H14.500 C16.500 7.500 17.500 9 17.500 10.500 V14.500 H1.500Z" fill="#8c8c8c" stroke="#1a1a1a" stroke-width="1.100"/><path d="M1.500 13 H17.500 V16.500 H1.500Z" fill="#5a5a5a" stroke="#1a1a1a" stroke-width="1"/><path d="M5 15 H6.500 M8 15 H9.500" stroke="#ddd" stroke-width="1"/><path d="M3 18 H16.500" stroke="#aaa" stroke-width="1"/></svg>
<svg class="a" style="left:314px;top:48px" width="20" height="18" viewBox="0 -1 20 18.500"><path d="M5 2.200 H11 C17 2.200 17 10.500 11 10.500 H8 V7.300 L1.500 12 L8 16.700 V13.500 H11 C20.500 13.500 20.500 0 11 0" fill="#f0f0f0" stroke="#c6c6c6" stroke-width="1.100" stroke-linejoin="round"/><circle cx="4" cy="1.500" r="1" fill="none" stroke="#c6c6c6" stroke-width=".7"/><circle cx="7" cy="1.500" r="1" fill="none" stroke="#c6c6c6" stroke-width=".7"/></svg>
<svg class="a" style="left:340px;top:48px" width="20" height="18" viewBox="0 -1 20 18.500"><g transform="translate(20,0) scale(-1,1)"><path d="M5 2.200 H11 C17 2.200 17 10.500 11 10.500 H8 V7.300 L1.500 12 L8 16.700 V13.500 H11 C20.500 13.500 20.500 0 11 0" fill="#f0f0f0" stroke="#c6c6c6" stroke-width="1.100" stroke-linejoin="round"/><circle cx="4" cy="1.500" r="1" fill="none" stroke="#c6c6c6" stroke-width=".7"/><circle cx="7" cy="1.500" r="1" fill="none" stroke="#c6c6c6" stroke-width=".7"/></g></svg>
<svg class="a" style="left:374px;top:48px" width="16" height="18" viewBox="0 0 16 18"><path d="M7 1 L9.500 9 L12.500 3.500 L9.800 11.500 M5.500 3 L9 10" fill="none" stroke="#c9c9c9" stroke-width="1.400" stroke-linecap="round"/><ellipse cx="4" cy="13.500" rx="2.500" ry="2" fill="none" stroke="#c9c9c9" stroke-width="1.300" transform="rotate(-35 4 13.500)"/><ellipse cx="10.500" cy="14.500" rx="1.800" ry="2.400" fill="none" stroke="#c9c9c9" stroke-width="1.300"/><path d="M5.800 12 L9 9.500 L10 12.300" fill="none" stroke="#c9c9c9" stroke-width="1.300"/></svg>
<svg class="a" style="left:399px;top:49px" width="16" height="16" viewBox="0 0 16 16"><rect x="6" y="1" width="9" height="9" fill="#f2f2f2" stroke="#c9c9c9" stroke-width="1.200"/><rect x="1" y="6" width="9" height="9" fill="#f2f2f2" stroke="#c9c9c9" stroke-width="1.200"/></svg>
<svg class="a" style="left:425px;top:48px" width="17" height="18" viewBox="0 0 17 18"><rect x="1.200" y="2" width="13" height="14.500" rx="1.500" fill="#fff" stroke="#1a1a1a" stroke-width="1.700"/><path d="M4.500 2 V4 H11 V2" fill="none" stroke="#1a1a1a" stroke-width="1.300"/><rect x="8" y="7.500" width="7.700" height="10" rx=".8" fill="#fff" stroke="#1a1a1a" stroke-width="1.400"/></svg>
<svg class="a" style="left:451px;top:47px" width="17" height="19" viewBox="0 0 17 19"><path d="M1 4.500 H16 M6 4 V2.500 H11 V4 M2.500 4.500 L4 18 H13 L14.500 4.500" fill="#f4f4f4" stroke="#c9c9c9" stroke-width="1.300"/><path d="M6 7.500 L6.500 15.500 M8.500 7.500 V15.500 M11 7.500 L10.500 15.500" stroke="#c9c9c9" stroke-width="1.100"/></svg>
<div style="left:480px;top:46px;width:66px;height:21px;background:linear-gradient(#fff,#f6f6f6);border:1px solid #8e8e8e"></div>
<span class="t" style="left:483.7px;top:50.50px;font:normal 13px 'DejaVu Sans','Liberation Sans',sans-serif;line-height:1;color:#111;letter-spacing:-1.869px;">50%</span>
<svg class="a" style="left:532px;top:55px" width="7" height="5" viewBox="0 0 7 5"><path d="M.3 .5 H6.700 L3.500 4.500Z" fill="#111"/></svg>
<svg class="a" style="left:557px;top:48px" width="18" height="18" viewBox="0 0 18 18"><circle cx="6.600" cy="7.600" r="5.100" fill="#fff" stroke="#1a1a1a" stroke-width="1.400"/><path d="M4 7.600 H9.200 M6.600 5 V10.200" stroke="#1a1a1a" stroke-width="1.300"/><path d="M10.500 11.500 L15.500 16.500" stroke="#1a1a1a" stroke-width="3" stroke-linecap="round"/><path d="M11 12 L15.200 16.200" stroke="#fff" stroke-width="1"/></svg>
<svg class="a" style="left:583px;top:48px" width="18" height="18" viewBox="0 0 18 18"><circle cx="6.600" cy="7.600" r="5.100" fill="#fff" stroke="#1a1a1a" stroke-width="1.400"/><path d="M4 7.600 H9.200" stroke="#1a1a1a" stroke-width="1.300"/><path d="M10.500 11.500 L15.500 16.500" stroke="#1a1a1a" stroke-width="3" stroke-linecap="round"/><path d="M11 12 L15.200 16.200" stroke="#fff" stroke-width="1"/></svg>
<svg class="a" style="left:609px;top:49px" width="18" height="18" viewBox="0 0 18 18"><rect x=".7" y=".7" width="16" height="18" fill="#fbfbfb" stroke="#1a1a1a" stroke-width="1.400"/><path d="M2.5 3.500 H15 M2.5 7.500 H15 M2.5 11.500 H15 M2.5 15.500 H15 M10 3.500 V7.500 M6 7.500 V11.500 M10 11.500 V15.500" stroke="#bdbdbd" stroke-width="1.100" fill="none"/></svg>
<svg class="a" style="left:634px;top:49px" width="19" height="18" viewBox="0 0 19 18"><rect x="1" y="0" width="16.500" height="18" fill="#f6f6f6"/><path d="M2.5 3.500 H16 M2.5 7.500 H16 M2.5 11.500 H16 M2.5 15.500 H16 M11 3.500 V7.500 M6 7.500 V11.500 M11 11.500 V15.500" stroke="#bdbdbd" stroke-width="1.100" fill="none"/><path d="M1 0 V18 M17.500 0 V18" stroke="#1a1a1a" stroke-width="1.400"/><path d="M3 8.500 H15.500 M5.500 6 L3 8.500 L5.500 11 M13 6 L15.500 8.500 L13 11" fill="none" stroke="#1a1a1a" stroke-width="1.200"/></svg>
<svg class="a" style="left:667px;top:48px" width="18" height="18" viewBox="0 0 18 18"><circle cx="6.500" cy="5" r="3.700" fill="#fff" stroke="#1a1a1a" stroke-width="1.300"/><path d="M2 17.500 L5.500 9 M11.500 17.500 L8 9.500" fill="none" stroke="#1a1a1a" stroke-width="1.300"/><path d="M8.500 6 L10.500 4.500 L15.500 10 L13.500 12Z" fill="#fff" stroke="#1a1a1a" stroke-width="1.200"/></svg>
<svg class="a" style="left:690px;top:47px" width="22" height="20" viewBox="0 0 22 20"><path d="M2 12 C1 4 5 1.500 11 1.500 C17 1.500 21 4 20 12 V18 H2Z" fill="#e0e0e0" stroke="#d0d0d0" stroke-width="1"/><circle cx="7.500" cy="11" r="2.500" fill="#ececec" stroke="#c4c4c4" stroke-width="1"/><circle cx="14.500" cy="11" r="2.500" fill="#ececec" stroke="#c4c4c4" stroke-width="1"/><path d="M4 6 Q7 3 10 6 Q13 3 17 6" stroke="#cfcfcf" stroke-width="1.200" fill="none"/></svg>
<div style="left:1203px;top:43px;width:163px;height:660px;background:#fdfde0"></div>
<div style="left:1203px;top:43px;width:1px;height:279px;background:#8acb10"></div>
<div style="left:1204px;top:64px;width:10px;height:257px;background:linear-gradient(90deg,#f4f4d0,#fdfde0)"></div>
<div style="left:1365px;top:43px;width:1px;height:333px;background:#8acb10"></div>
<div style="left:1203px;top:43px;width:163px;height:21px;background:#85c808"></div>
<span class="t" style="left:1211.4px;top:48.15px;font:normal 14px 'DejaVu Sans','Liberation Sans',sans-serif;line-height:1;color:#fff;letter-spacing:0.909px;-webkit-text-stroke:.3px #fff;">Layer Properties</span>
<div style="left:1209px;top:66px;width:150px;height:22px;background:#f0f0f0;border:1px solid #8a8a8a"></div>
<div style="left:1203px;top:321px;width:163px;height:1px;background:#5f8a08"></div>
<div style="left:1203px;top:322px;width:163px;height:2px;background:#fdfde0"></div>
<div style="left:1203px;top:324px;width:163px;height:20px;background:#85c808"></div>
<span class="t" style="left:1211.5px;top:328.15px;font:normal 14px 'DejaVu Sans','Liberation Sans',sans-serif;line-height:1;color:#fff;letter-spacing:0.973px;-webkit-text-stroke:.3px #fff;">Layer List</span>
<div style="left:1204px;top:344px;width:160px;height:32px;background:linear-gradient(#fbfbd8,#fdfde0)"></div>
<svg class="a" style="left:1213px;top:351px" width="12" height="14" viewBox="0 0 12 14"><path d="M4 0 H8 V5 H11 L6 10 L1 5 H4Z" fill="#d9d9c4"/><path d="M.5 12.500 H11.500" stroke="#d9d9c4" stroke-width="1.200"/></svg>
<svg class="a" style="left:1239px;top:353px" width="12" height="11" viewBox="0 0 12 11"><path d="M4 .6 H8 V5 H10.800 L6 10 L1.200 5 H4Z" fill="#fbfbe4" stroke="#d9d9c4" stroke-width="1.100"/></svg>
<svg class="a" style="left:1265px;top:353px" width="12" height="11" viewBox="0 0 12 11"><path d="M4 10.400 H8 V6 H10.800 L6 1 L1.200 6 H4Z" fill="#fbfbe4" stroke="#d9d9c4" stroke-width="1.100"/></svg>
<svg class="a" style="left:1290px;top:351px" width="12" height="14" viewBox="0 0 12 14"><path d="M.5 1 H11.500" stroke="#d9d9c4" stroke-width="1.200"/><path d="M4 13 H8 V8.500 H11 L6 3.500 L1 8.500 H4Z" fill="#d9d9c4"/></svg>
<svg class="a" style="left:1340px;top:348px" width="17" height="20" viewBox="0 0 17 20"><path d="M1 5 H16 M6 4.500 V2.500 H11 V4.500 M2.500 5 L4 18.500 H13 L14.500 5" fill="#fafae0" stroke="#d9d9c4" stroke-width="1.300"/><path d="M6 8 L6.500 16 M8.500 8 V16 M11 8 L10.500 16" stroke="#d9d9c4" stroke-width="1.100"/></svg>
<div style="left:1204px;top:376px;width:146px;height:168px;background:#fff"></div>
<div style="left:1204px;top:376px;width:146px;height:1px;background:#b4b4b4"></div>
<svg class="a" style="left:1207px;top:383px" width="6" height="10" viewBox="0 0 6 10"><path d="M.3 .3 L5.500 4.800 L.3 9.400Z" fill="#111"/></svg>
<svg class="a" style="left:1220px;top:379px" width="19" height="18" viewBox="0 0 19 18"><rect x=".6" y=".6" width="17" height="16.800" fill="#fff" stroke="#111" stroke-width="1.200"/><circle cx="7" cy="9.500" r="4.300" fill="#fff" stroke="#666" stroke-width=".8"/><path d="M2.500 9 C3 4.500 7 3.500 10 5 L11 3.500 L10.800 7" fill="#bbb" stroke="#666" stroke-width=".6"/><circle cx="5.500" cy="9.200" r=".6" fill="#333"/><circle cx="8.500" cy="9.200" r=".6" fill="#333"/><path d="M5 11.300 Q7 12.800 9 11.300" stroke="#444" stroke-width=".6" fill="none"/><path d="M2.500 17 C3 14.500 5 14 7 14 C9 14 11 14.500 11.500 17" fill="#eee" stroke="#666" stroke-width=".7"/><path d="M13 2.500 H16.500 M13 2.500 V10 L11.500 12.500 M16 4 V9" stroke="#777" stroke-width=".7" fill="none" stroke-dasharray="1.400 .8"/></svg>
<span class="t" style="left:1243.5px;top:381.22px;font:normal 13.33px 'Liberation Sans',sans-serif;line-height:1;color:#000;">Panel 1</span>
<div style="left:1204px;top:400px;width:146px;height:1px;background:#b4b4b4"></div>
<svg class="a" style="left:1207px;top:407px" width="6" height="10" viewBox="0 0 6 10"><path d="M.3 .3 L5.500 4.800 L.3 9.400Z" fill="#111"/></svg>
<svg class="a" style="left:1220px;top:403px" width="19" height="18" viewBox="0 0 19 18"><rect x=".6" y=".6" width="17" height="16.800" fill="#fff" stroke="#111" stroke-width="1.200"/><circle cx="7" cy="9.500" r="4.300" fill="#fff" stroke="#666" stroke-width=".8"/><path d="M2.500 9 C3 4.500 7 3.500 10 5 L11 3.500 L10.800 7" fill="#bbb" stroke="#666" stroke-width=".6"/><circle cx="5.500" cy="9.200" r=".6" fill="#333"/><circle cx="8.500" cy="9.200" r=".6" fill="#333"/><path d="M5 11.300 Q7 12.800 9 11.300" stroke="#444" stroke-width=".6" fill="none"/><path d="M2.500 17 C3 14.500 5 14 7 14 C9 14 11 14.500 11.500 17" fill="#eee" stroke="#666" stroke-width=".7"/><path d="M13 2.500 H16.500 M13 2.500 V10 L11.500 12.500 M16 4 V9" stroke="#777" stroke-width=".7" fill="none" stroke-dasharray="1.400 .8"/></svg>
<span class="t" style="left:1243.5px;top:405.22px;font:normal 13.33px 'Liberation Sans',sans-serif;line-height:1;color:#000;">Panel 2</span>
<div style="left:1204px;top:424px;width:146px;height:1px;background:#b4b4b4"></div>
<svg class="a" style="left:1207px;top:431px" width="6" height="10" viewBox="0 0 6 10"><path d="M.3 .3 L5.500 4.800 L.3 9.400Z" fill="#111"/></svg>
<svg class="a" style="left:1220px;top:427px" width="19" height="18" viewBox="0 0 19 18"><rect x=".6" y=".6" width="17" height="16.800" fill="#fff" stroke="#111" stroke-width="1.200"/><circle cx="7" cy="9.500" r="4.300" fill="#fff" stroke="#666" stroke-width=".8"/><path d="M2.500 9 C3 4.500 7 3.500 10 5 L11 3.500 L10.800 7" fill="#bbb" stroke="#666" stroke-width=".6"/><circle cx="5.500" cy="9.200" r=".6" fill="#333"/><circle cx="8.500" cy="9.200" r=".6" fill="#333"/><path d="M5 11.300 Q7 12.800 9 11.300" stroke="#444" stroke-width=".6" fill="none"/><path d="M2.500 17 C3 14.500 5 14 7 14 C9 14 11 14.500 11.500 17" fill="#eee" stroke="#666" stroke-width=".7"/><path d="M13 2.500 H16.500 M13 2.500 V10 L11.500 12.500 M16 4 V9" stroke="#777" stroke-width=".7" fill="none" stroke-dasharray="1.400 .8"/></svg>
<span class="t" style="left:1243.5px;top:429.22px;font:normal 13.33px 'Liberation Sans',sans-serif;line-height:1;color:#000;">Panel 3</span>
<div style="left:1204px;top:448px;width:146px;height:1px;background:#b4b4b4"></div>
<svg class="a" style="left:1207px;top:455px" width="6" height="10" viewBox="0 0 6 10"><path d="M.3 .3 L5.500 4.800 L.3 9.400Z" fill="#111"/></svg>
<svg class="a" style="left:1220px;top:451px" width="19" height="18" viewBox="0 0 19 18"><rect x=".6" y=".6" width="17" height="16.800" fill="#fff" stroke="#111" stroke-width="1.200"/><circle cx="7" cy="9.500" r="4.300" fill="#fff" stroke="#666" stroke-width=".8"/><path d="M2.500 9 C3 4.500 7 3.500 10 5 L11 3.500 L10.800 7" fill="#bbb" stroke="#666" stroke-width=".6"/><circle cx="5.500" cy="9.200" r=".6" fill="#333"/><circle cx="8.500" cy="9.200" r=".6" fill="#333"/><path d="M5 11.300 Q7 12.800 9 11.300" stroke="#444" stroke-width=".6" fill="none"/><path d="M2.500 17 C3 14.500 5 14 7 14 C9 14 11 14.500 11.500 17" fill="#eee" stroke="#666" stroke-width=".7"/><path d="M13 2.500 H16.500 M13 2.500 V10 L11.500 12.500 M16 4 V9" stroke="#777" stroke-width=".7" fill="none" stroke-dasharray="1.400 .8"/></svg>
<span class="t" style="left:1243.5px;top:453.22px;font:normal 13.33px 'Liberation Sans',sans-serif;line-height:1;color:#000;">Panel 4</span>
<div style="left:1204px;top:472px;width:146px;height:1px;background:#b4b4b4"></div>
<svg class="a" style="left:1222px;top:473.5px" width="15" height="21" viewBox="0 0 15 21"><circle cx="7.500" cy="4" r="3.300" fill="#fff" stroke="#222" stroke-width="1"/><circle cx="6.300" cy="3.600" r=".5" fill="#222"/><circle cx="8.700" cy="3.600" r=".5" fill="#222"/><path d="M6.300 5.300 Q7.500 6.200 8.700 5.300" stroke="#222" stroke-width=".5" fill="none"/><path d="M5.500 7.500 L1 12.500 L2.500 13.500 L5.500 11 L4.500 17.500 L3 19.500 H7.500 L7.500 14 L9 17.500 L8.500 19.500 H12.500 L10 11 L12.500 13 L14 11.800 L9.500 7.500Z" fill="#fff" stroke="#222" stroke-width=".9" stroke-linejoin="round"/></svg>
<span class="t" style="left:1243.5px;top:477.22px;font:normal 13.33px 'Liberation Sans',sans-serif;line-height:1;color:#000;letter-spacing:0.210px;">01.Comipo…</span>
<div style="left:1204px;top:496px;width:146px;height:1px;background:#b4b4b4"></div>
<svg class="a" style="left:1207px;top:503px" width="6" height="10" viewBox="0 0 6 10"><path d="M.3 .3 L5.500 4.800 L.3 9.400Z" fill="#111"/></svg>
<span class="t" style="left:1243.5px;top:501.22px;font:normal 13.33px 'Liberation Sans',sans-serif;line-height:1;color:#000;">Balloon 2</span>
<div style="left:1204px;top:520px;width:146px;height:1px;background:#b4b4b4"></div>
<svg class="a" style="left:1219.5px;top:523.5px" width="20" height="19" viewBox="0 0 20 19"><rect x=".6" y=".6" width="18.300" height="17.300" fill="#fff" stroke="#111" stroke-width="1.200"/><path d="M3 9.500 H16.500 M5.500 9.500 V6.500 L9.700 3.300 L14 6.500 V9.500 M8 9.500 V7 H11.500 V9.500" fill="none" stroke="#555" stroke-width=".8"/><path d="M3 3 L4 4 M15 2.500 L16 3.500" stroke="#999" stroke-width=".7"/><rect x=".6" y="10.500" width="18.300" height="7.400" fill="#fff" stroke="#111" stroke-width="1.100"/><text x="2.300" y="16.800" font-family="Liberation Sans,sans-serif" font-weight="bold" font-size="6.800" fill="#111" textLength="15" lengthAdjust="spacingAndGlyphs">USER</text></svg>
<span class="t" style="left:1243.5px;top:525.22px;font:normal 13.33px 'Liberation Sans',sans-serif;line-height:1;color:#000;">Image 3</span>
<div style="left:1350px;top:376px;width:16px;height:327px;background:linear-gradient(90deg,#b6b6b6,#d2d2d2 40%,#d6d6d6 70%,#c4c4c4)"></div>
<svg class="a" style="left:1352px;top:381px" width="11" height="7" viewBox="0 0 11 7"><path d="M1.500 5.500 L5.500 1.800 L9.500 5.500" fill="none" stroke="#222" stroke-width="1.600"/></svg>
<svg class="a" style="left:1353px;top:692px" width="9" height="6" viewBox="0 0 9 6"><path d="M.5 .5 H8.500 L4.500 5Z" fill="#222"/></svg>
<div style="left:188px;top:66px;width:990px;height:596px;background:#f0f0f0;border:1px solid #8c8c8c;border-radius:5px 5px 1px 1px;box-shadow:0 0 14px 1px rgba(0,0,0,.28),0 12px 26px 2px rgba(0,0,0,.46)"></div>
<div style="left:189px;top:67px;width:988px;height:23px;background:linear-gradient(#c2c2c2,#a9a9a9 45%,#8e8e8e);border-radius:4px 4px 0 0;box-shadow:inset 0 1px 0 #d8d8d8"></div>
<div style="left:189px;top:90px;width:988px;height:571px;border:1px solid #fafafa;border-top:none;border-right:2px solid #ababab;border-left:2px solid #d6d6d6"></div>
<span class="t" style="left:190.5px;top:72.44px;font:normal 12px 'Liberation Sans',sans-serif;line-height:1;color:#000;letter-spacing:-0.483px;">Create / Edit Character</span>
<div style="left:1146.5px;top:72px;width:13px;height:13px;border-radius:50%;background:radial-gradient(circle at 50% 26%,#fff 0%,#ffc0cc 14%,#e8204a 40%,#c00830 60%,#e85070 82%,#5a0012 100%);border:1px solid #4a0a18;border-bottom-color:#a06070;box-shadow:0 1px 0 rgba(255,255,255,.6)"></div>
<span class="t" style="left:201.4px;top:99.42px;font:normal 12.5px 'Liberation Sans',sans-serif;line-height:1;color:#000;transform:scaleX(0.8350);transform-origin:0 0;">Target :</span>
<div class="lb" style="left:201px;top:118px;width:185px;height:66px;"></div>
<span class="t" style="left:205px;top:120.92px;font:normal 12.5px 'Liberation Sans',sans-serif;line-height:1;color:#000;transform:scaleX(0.8350);transform-origin:0 0;">Clothes</span>
<span class="t" style="left:205px;top:133.92px;font:normal 12.5px 'Liberation Sans',sans-serif;line-height:1;color:#000;transform:scaleX(0.8350);transform-origin:0 0;">Face Type and Eye Color</span>
<span class="t" style="left:205px;top:146.92px;font:normal 12.5px 'Liberation Sans',sans-serif;line-height:1;color:#000;transform:scaleX(0.8350);transform-origin:0 0;">Hair Style and Color</span>
<div style="left:203px;top:159px;width:181px;height:13px;background:#4c4c4c"></div>
<span class="t" style="left:205px;top:159.92px;font:normal 12.5px 'Liberation Sans',sans-serif;line-height:1;color:#fff;transform:scaleX(0.8350);transform-origin:0 0;">Additional Parts</span>
<span class="t" style="left:201.4px;top:191.92px;font:normal 12.5px 'Liberation Sans',sans-serif;line-height:1;color:#000;transform:scaleX(0.8350);transform-origin:0 0;">Additional Parts Type :</span>
<div class="lb" style="left:201px;top:211px;width:185px;height:204px;"></div>
<span class="t" style="left:205px;top:213.92px;font:normal 12.5px 'Liberation Sans',sans-serif;line-height:1;color:#000;transform:scaleX(0.8350);transform-origin:0 0;">Shoes</span>
<span class="t" style="left:205px;top:226.92px;font:normal 12.5px 'Liberation Sans',sans-serif;line-height:1;color:#000;transform:scaleX(0.8350);transform-origin:0 0;">Glasses</span>
<span class="t" style="left:205px;top:239.92px;font:normal 12.5px 'Liberation Sans',sans-serif;line-height:1;color:#000;transform:scaleX(0.8350);transform-origin:0 0;">Cheek</span>
<span class="t" style="left:205px;top:252.92px;font:normal 12.5px 'Liberation Sans',sans-serif;line-height:1;color:#000;transform:scaleX(0.8350);transform-origin:0 0;">Skin</span>
<span class="t" style="left:205px;top:265.92px;font:normal 12.5px 'Liberation Sans',sans-serif;line-height:1;color:#000;transform:scaleX(0.8350);transform-origin:0 0;">Lines(Mouth)</span>
<div style="left:203px;top:278px;width:181px;height:13px;background:#4c4c4c"></div>
<span class="t" style="left:205px;top:278.92px;font:normal 12.5px 'Liberation Sans',sans-serif;line-height:1;color:#fff;transform:scaleX(0.8350);transform-origin:0 0;">Lines(Cheek)</span>
<span class="t" style="left:205px;top:291.92px;font:normal 12.5px 'Liberation Sans',sans-serif;line-height:1;color:#000;transform:scaleX(0.8350);transform-origin:0 0;">Lines(Forehead)</span>
<span class="t" style="left:205px;top:304.92px;font:normal 12.5px 'Liberation Sans',sans-serif;line-height:1;color:#000;transform:scaleX(0.8350);transform-origin:0 0;">Beard(Mouth)</span>
<span class="t" style="left:205px;top:317.92px;font:normal 12.5px 'Liberation Sans',sans-serif;line-height:1;color:#000;transform:scaleX(0.8350);transform-origin:0 0;">Mask</span>
<span class="t" style="left:205px;top:330.92px;font:normal 12.5px 'Liberation Sans',sans-serif;line-height:1;color:#000;transform:scaleX(0.8350);transform-origin:0 0;">Ponytail</span>
<span class="t" style="left:205px;top:343.92px;font:normal 12.5px 'Liberation Sans',sans-serif;line-height:1;color:#000;transform:scaleX(0.8350);transform-origin:0 0;">Stray_Hair_1</span>
<span class="t" style="left:205px;top:356.92px;font:normal 12.5px 'Liberation Sans',sans-serif;line-height:1;color:#000;transform:scaleX(0.8350);transform-origin:0 0;">Stray_Hair_2</span>
<span class="t" style="left:205px;top:369.92px;font:normal 12.5px 'Liberation Sans',sans-serif;line-height:1;color:#000;transform:scaleX(0.8350);transform-origin:0 0;">Stray_Hair_3</span>
<span class="t" style="left:205px;top:382.92px;font:normal 12.5px 'Liberation Sans',sans-serif;line-height:1;color:#000;transform:scaleX(0.8350);transform-origin:0 0;">Accessory</span>
<span class="t" style="left:201.4px;top:428.92px;font:normal 12.5px 'Liberation Sans',sans-serif;line-height:1;color:#000;transform:scaleX(0.8350);transform-origin:0 0;">Color :</span>
<div class="btn" style="left:246px;top:422px;width:139px;height:21px;"></div>
<span class="t" style="left:272.35px;top:426.84px;font:normal 12px 'Liberation Sans',sans-serif;line-height:1;color:#000;letter-spacing:-0.233px;-webkit-text-stroke:.35px #000;">Match Hair Color</span>
<div class="lb" style="left:201px;top:448px;width:185px;height:204px;background:#fcfcfc"></div>
<span class="t" style="left:205px;top:450.42px;font:normal 12.5px 'Liberation Sans',sans-serif;line-height:1;color:#8a8a8a;transform:scaleX(0.8350);transform-origin:0 0;">You can not select.</span>
<span class="t" style="left:391.6px;top:99.42px;font:normal 12.5px 'Liberation Sans',sans-serif;line-height:1;color:#000;transform:scaleX(0.8350);transform-origin:0 0;">Candidates :</span>
<div class="lb" style="left:392px;top:118px;width:119px;height:533px;background:#fafafa"></div>
<div style="left:394px;top:120px;width:115px;height:270px;background:#fff"></div>
<div style="left:394px;top:120px;width:115px;height:90px;background:#4c4c4c"></div>
<div style="left:409px;top:123px;width:84px;height:84px;background:#fff"></div>
<span class="t" style="left:429.20px;top:152.01px;font:normal 19.6px 'Liberation Sans',sans-serif;line-height:1;color:#000;-webkit-text-stroke:.35px #000;">none</span>
<svg class="a" style="left:417px;top:214px" width="70" height="84" viewBox="0 0 70 84"><path d="M8 45 C5 42 3.500 47 5 54 C6.500 60 9 64 12.500 66Z" fill="#f8d2c0"/><path d="M62 45 C65 42 66.500 47 65 54 C63.500 60 61 64 57.500 66Z" fill="#f8d2c0"/><path d="M35 3 C18 3 7.500 15 7.500 32 C7.500 45 10.500 56 16 65 C22 74 30 80.500 35 80.500 C40 80.500 48 74 54 65 C59.500 56 62.500 45 62.500 32 C62.500 15 52 3 35 3Z" fill="#fde5d6"/><path d="M12.500 55 C14 60 16 64 19 68 M57.500 55 C56 60 54 64 51 68" stroke="#555" stroke-width="0.9" fill="none"/></svg>
<svg class="a" style="left:417px;top:303.5px" width="70" height="84" viewBox="0 0 70 84"><path d="M8 45 C5 42 3.500 47 5 54 C6.500 60 9 64 12.500 66Z" fill="#f8d2c0"/><path d="M62 45 C65 42 66.500 47 65 54 C63.500 60 61 64 57.500 66Z" fill="#f8d2c0"/><path d="M35 3 C18 3 7.500 15 7.500 32 C7.500 45 10.500 56 16 65 C22 74 30 80.500 35 80.500 C40 80.500 48 74 54 65 C59.500 56 62.500 45 62.500 32 C62.500 15 52 3 35 3Z" fill="#fde5d6"/><path d="M17 66 L20 71 M53 66 L50 71" stroke="#777" stroke-width="0.7" fill="none"/></svg>
<span class="t" style="left:519px;top:99.42px;font:normal 12.5px 'Liberation Sans',sans-serif;line-height:1;color:#000;transform:scaleX(0.8350);transform-origin:0 0;">Adjust Additional Parts :</span>
<div style="left:519px;top:118px;width:176px;height:533px;border:1px solid #d2d2d2;border-left-color:#a6a6a6;border-right-color:#fbfbfb;border-bottom-color:#fbfbfb"></div>
<div style="left:520px;top:119px;width:1px;height:531px;background:#fbfbfb"></div>
<span class="t" style="left:529px;top:129.92px;font:normal 12.5px 'Liberation Sans',sans-serif;line-height:1;color:#a5a5a5;transform:scaleX(0.8350);transform-origin:0 0;">Position :</span><div class="btn" style="left:592px;top:128px;width:47px;height:18px;"></div><span class="t" style="left:601.00px;top:130.84px;font:normal 12px 'Liberation Sans',sans-serif;line-height:1;color:#333;letter-spacing:-0.472px;">Reset</span>
<span class="t" style="left:529px;top:169.92px;font:normal 12.5px 'Liberation Sans',sans-serif;line-height:1;color:#a5a5a5;transform:scaleX(0.8350);transform-origin:0 0;">X:</span><span class="t" style="left:612.66px;top:150.84px;font:normal 12px 'Liberation Sans',sans-serif;line-height:1;color:#a0a0a0;transform:scaleX(0.8500);transform-origin:0 0;">0</span><div class="btn" style="left:547px;top:168px;width:15px;height:14px;border-color:#8e8e8e;border-radius:2px"></div><span class="t" style="left:552.66px;top:169.19px;font:normal 11px 'Liberation Sans',sans-serif;line-height:1;color:#444;">-</span><div class="btn" style="left:669px;top:168px;width:15px;height:14px;border-color:#8e8e8e;border-radius:2px"></div><span class="t" style="left:673.58px;top:170.53px;font:normal 10px 'Liberation Sans',sans-serif;line-height:1;color:#444;">+</span><div style="left:573px;top:175px;width:86px;height:2px;background:#c8c8c8;border-bottom:1px solid #fff"></div><div style="left:611px;top:167px;width:10px;height:17px;border:1px solid #5e5e5e;border-radius:3px;background:linear-gradient(#f6f6f6,#e4e4e4 45%,#b4b4b4);box-shadow:inset 0 0 0 1px rgba(255,255,255,.55)"></div>
<span class="t" style="left:529px;top:211.92px;font:normal 12.5px 'Liberation Sans',sans-serif;line-height:1;color:#a5a5a5;transform:scaleX(0.8350);transform-origin:0 0;">Y:</span><span class="t" style="left:612.66px;top:192.84px;font:normal 12px 'Liberation Sans',sans-serif;line-height:1;color:#a0a0a0;transform:scaleX(0.8500);transform-origin:0 0;">0</span><div class="btn" style="left:547px;top:210px;width:15px;height:14px;border-color:#8e8e8e;border-radius:2px"></div><span class="t" style="left:552.66px;top:211.19px;font:normal 11px 'Liberation Sans',sans-serif;line-height:1;color:#444;">-</span><div class="btn" style="left:669px;top:210px;width:15px;height:14px;border-color:#8e8e8e;border-radius:2px"></div><span class="t" style="left:673.58px;top:212.53px;font:normal 10px 'Liberation Sans',sans-serif;line-height:1;color:#444;">+</span><div style="left:573px;top:217px;width:86px;height:2px;background:#c8c8c8;border-bottom:1px solid #fff"></div><div style="left:611px;top:209px;width:10px;height:17px;border:1px solid #5e5e5e;border-radius:3px;background:linear-gradient(#f6f6f6,#e4e4e4 45%,#b4b4b4);box-shadow:inset 0 0 0 1px rgba(255,255,255,.55)"></div>
<span class="t" style="left:529px;top:252.92px;font:normal 12.5px 'Liberation Sans',sans-serif;line-height:1;color:#a5a5a5;transform:scaleX(0.8350);transform-origin:0 0;">Z:</span><span class="t" style="left:612.66px;top:233.84px;font:normal 12px 'Liberation Sans',sans-serif;line-height:1;color:#a0a0a0;transform:scaleX(0.8500);transform-origin:0 0;">0</span><div class="btn" style="left:547px;top:251px;width:15px;height:14px;border-color:#8e8e8e;border-radius:2px"></div><span class="t" style="left:552.66px;top:252.19px;font:normal 11px 'Liberation Sans',sans-serif;line-height:1;color:#444;">-</span><div class="btn" style="left:669px;top:251px;width:15px;height:14px;border-color:#8e8e8e;border-radius:2px"></div><span class="t" style="left:673.58px;top:253.53px;font:normal 10px 'Liberation Sans',sans-serif;line-height:1;color:#444;">+</span><div style="left:573px;top:258px;width:86px;height:2px;background:#c8c8c8;border-bottom:1px solid #fff"></div><div style="left:611px;top:250px;width:10px;height:17px;border:1px solid #5e5e5e;border-radius:3px;background:linear-gradient(#f6f6f6,#e4e4e4 45%,#b4b4b4);box-shadow:inset 0 0 0 1px rgba(255,255,255,.55)"></div>
<span class="t" style="left:529px;top:289.92px;font:normal 12.5px 'Liberation Sans',sans-serif;line-height:1;color:#a5a5a5;transform:scaleX(0.8350);transform-origin:0 0;">Rotate :</span><div class="btn" style="left:592px;top:288px;width:47px;height:18px;"></div><span class="t" style="left:601.00px;top:290.84px;font:normal 12px 'Liberation Sans',sans-serif;line-height:1;color:#333;letter-spacing:-0.472px;">Reset</span>
<span class="t" style="left:529px;top:329.92px;font:normal 12.5px 'Liberation Sans',sans-serif;line-height:1;color:#a5a5a5;transform:scaleX(0.8350);transform-origin:0 0;">X:</span><span class="t" style="left:612.66px;top:310.84px;font:normal 12px 'Liberation Sans',sans-serif;line-height:1;color:#a0a0a0;transform:scaleX(0.8500);transform-origin:0 0;">0</span><div class="btn" style="left:547px;top:328px;width:15px;height:14px;border-color:#8e8e8e;border-radius:2px"></div><span class="t" style="left:552.66px;top:329.19px;font:normal 11px 'Liberation Sans',sans-serif;line-height:1;color:#444;">-</span><div class="btn" style="left:669px;top:328px;width:15px;height:14px;border-color:#8e8e8e;border-radius:2px"></div><span class="t" style="left:673.58px;top:330.54px;font:normal 10px 'Liberation Sans',sans-serif;line-height:1;color:#444;">+</span><div style="left:573px;top:335px;width:86px;height:2px;background:#c8c8c8;border-bottom:1px solid #fff"></div><div style="left:611px;top:327px;width:10px;height:17px;border:1px solid #5e5e5e;border-radius:3px;background:linear-gradient(#f6f6f6,#e4e4e4 45%,#b4b4b4);box-shadow:inset 0 0 0 1px rgba(255,255,255,.55)"></div>
<span class="t" style="left:529px;top:371.92px;font:normal 12.5px 'Liberation Sans',sans-serif;line-height:1;color:#a5a5a5;transform:scaleX(0.8350);transform-origin:0 0;">Y:</span><span class="t" style="left:612.66px;top:352.84px;font:normal 12px 'Liberation Sans',sans-serif;line-height:1;color:#a0a0a0;transform:scaleX(0.8500);transform-origin:0 0;">0</span><div class="btn" style="left:547px;top:370px;width:15px;height:14px;border-color:#8e8e8e;border-radius:2px"></div><span class="t" style="left:552.66px;top:371.19px;font:normal 11px 'Liberation Sans',sans-serif;line-height:1;color:#444;">-</span><div class="btn" style="left:669px;top:370px;width:15px;height:14px;border-color:#8e8e8e;border-radius:2px"></div><span class="t" style="left:673.58px;top:372.54px;font:normal 10px 'Liberation Sans',sans-serif;line-height:1;color:#444;">+</span><div style="left:573px;top:377px;width:86px;height:2px;background:#c8c8c8;border-bottom:1px solid #fff"></div><div style="left:611px;top:369px;width:10px;height:17px;border:1px solid #5e5e5e;border-radius:3px;background:linear-gradient(#f6f6f6,#e4e4e4 45%,#b4b4b4);box-shadow:inset 0 0 0 1px rgba(255,255,255,.55)"></div>
<span class="t" style="left:529px;top:412.92px;font:normal 12.5px 'Liberation Sans',sans-serif;line-height:1;color:#a5a5a5;transform:scaleX(0.8350);transform-origin:0 0;">Z:</span><span class="t" style="left:612.66px;top:393.84px;font:normal 12px 'Liberation Sans',sans-serif;line-height:1;color:#a0a0a0;transform:scaleX(0.8500);transform-origin:0 0;">0</span><div class="btn" style="left:547px;top:411px;width:15px;height:14px;border-color:#8e8e8e;border-radius:2px"></div><span class="t" style="left:552.66px;top:412.19px;font:normal 11px 'Liberation Sans',sans-serif;line-height:1;color:#444;">-</span><div class="btn" style="left:669px;top:411px;width:15px;height:14px;border-color:#8e8e8e;border-radius:2px"></div><span class="t" style="left:673.58px;top:413.54px;font:normal 10px 'Liberation Sans',sans-serif;line-height:1;color:#444;">+</span><div style="left:573px;top:418px;width:86px;height:2px;background:#c8c8c8;border-bottom:1px solid #fff"></div><div style="left:611px;top:410px;width:10px;height:17px;border:1px solid #5e5e5e;border-radius:3px;background:linear-gradient(#f6f6f6,#e4e4e4 45%,#b4b4b4);box-shadow:inset 0 0 0 1px rgba(255,255,255,.55)"></div>
<span class="t" style="left:529px;top:450.92px;font:normal 12.5px 'Liberation Sans',sans-serif;line-height:1;color:#a5a5a5;transform:scaleX(0.8350);transform-origin:0 0;">Size :</span><div class="btn" style="left:592px;top:449px;width:47px;height:18px;"></div><span class="t" style="left:601.00px;top:451.84px;font:normal 12px 'Liberation Sans',sans-serif;line-height:1;color:#333;letter-spacing:-0.472px;">Reset</span>
<span class="t" style="left:612.66px;top:470.84px;font:normal 12px 'Liberation Sans',sans-serif;line-height:1;color:#a0a0a0;transform:scaleX(0.8500);transform-origin:0 0;">0</span><div class="btn" style="left:547px;top:488px;width:15px;height:14px;border-color:#8e8e8e;border-radius:2px"></div><span class="t" style="left:552.66px;top:489.19px;font:normal 11px 'Liberation Sans',sans-serif;line-height:1;color:#444;">-</span><div class="btn" style="left:669px;top:488px;width:15px;height:14px;border-color:#8e8e8e;border-radius:2px"></div><span class="t" style="left:673.58px;top:490.54px;font:normal 10px 'Liberation Sans',sans-serif;line-height:1;color:#444;">+</span><div style="left:573px;top:495px;width:86px;height:2px;background:#c8c8c8;border-bottom:1px solid #fff"></div><div style="left:611px;top:487px;width:10px;height:17px;border:1px solid #5e5e5e;border-radius:3px;background:linear-gradient(#f6f6f6,#e4e4e4 45%,#b4b4b4);box-shadow:inset 0 0 0 1px rgba(255,255,255,.55)"></div>
<span class="t" style="left:701.7px;top:115.42px;font:normal 12.5px 'Liberation Sans',sans-serif;line-height:1;color:#000;transform:scaleX(0.8350);transform-origin:0 0;">Preview :</span>
<div class="btn" style="left:785px;top:112px;width:261px;height:21px;"></div>
<span class="t" style="left:789.5px;top:116.34px;font:normal 12px 'Liberation Sans',sans-serif;line-height:1;color:#000;letter-spacing:-0.314px;text-shadow:0 0 .4px #000;">Full Body : 45 Degree Right Front</span>
<svg class="a" style="left:1031px;top:120px" width="8" height="5" viewBox="0 0 8 5"><path d="M0.5 0.5 H7.5 L4 4.5Z" fill="#111"/></svg>
<div style="left:1055px;top:115px;width:13px;height:13px;background:#fff;border:1px solid #333;box-shadow:inset 0 0 0 1px #d8d8d8"></div>
<svg class="a" style="left:1056px;top:116px" width="11" height="11" viewBox="0 0 11 11"><path d="M2 5.2 L4.4 8.2 L9 1.8" fill="none" stroke="#111" stroke-width="1.7"/></svg>
<span class="t" style="left:1070.7px;top:115.92px;font:normal 12.5px 'Liberation Sans',sans-serif;line-height:1;color:#000;transform:scaleX(0.8350);transform-origin:0 0;">Auto</span>
<div style="left:700px;top:140px;width:459px;height:458px;background:#fff;border:1px solid #6e6e6e;border-right-color:#e3e3e3;border-bottom-color:#e3e3e3"></div>
<svg class="a" style="left:701px;top:141px" width="457" height="456" viewBox="701 141 457 456">
<defs><linearGradient id="glens" x1="0" y1="0" x2="0" y2="1"><stop offset="0" stop-color="#5a6168"/><stop offset=".45" stop-color="#1c2024"/><stop offset="1" stop-color="#0c0e10"/></linearGradient></defs>
<g stroke-linejoin="round">
<!-- back shoe -->
<path d="M874 514 L871 520.500 C869.500 525 871 529 872.700 533.400 C876 541 881 549 885.600 556.100 C889 561 894 564.500 898.600 565.800 L906.700 562.600 C907.500 557 906.500 551 905 546.400 L900 526 L888.900 522Z" fill="#161616" stroke="#050505" stroke-width=".8"/>
<path d="M888 529 C892 538 898 550 900 562" stroke="#3a3a3a" stroke-width=".8" fill="none"/>
<!-- back leg -->
<path d="M924.500 449 C920 458 916 465 911.500 471.900 L888.900 497.800 C884 503 879 508 875.900 512.400 L874.300 517.200 C882 523 890 527 898.600 530.200 L903.400 523.700 L919.600 501 L930 486 L940 452Z" fill="#202020" stroke="#0c0c0c" stroke-width=".7"/>
<!-- front shoe -->
<path d="M940.700 577 L939 585.200 C945 588 951 589.500 956.900 590.100 L979.500 593.300 C984 593.800 989 592.500 992.500 590.100 L989.300 585.200 C983 581 976 577 969.800 573.900 L961.700 571Z" fill="#181818" stroke="#050505" stroke-width=".8"/>
<path d="M957 575 C965 580 975 586 984 591" stroke="#3c3c3c" stroke-width=".8" fill="none"/>
<!-- front leg + hips -->
<path d="M903 364 L958.500 364 L958.500 397.400 L958.500 429.800 C956 441 954.500 452 954.300 462.200 L956.900 494.600 L961.700 546.400 L965 572.300 C956 575.500 946 576.500 937.400 575.500 L935.800 559.300 L931 520.500 L927.700 488.100 C926 475 925 462 924.500 449.200 C921 437 918.500 425 916.400 413.600Z" fill="#222" stroke="#0c0c0c" stroke-width=".7"/>
<path d="M939 374 C941 400 946 430 953 462 M943 373.500 C946 400 951 432 954.300 462" stroke="#0a0a0a" stroke-width=".7" fill="none"/>
<!-- left hand -->
<path d="M849.500 361 L864.900 366.500 C865.500 373 864.500 380 863 385 C862 389 860.500 392 859.300 394 C858 391 857.500 388 857.800 384 C856 389 854 394 851.500 397.500 L848.500 401.500 C847.500 402 846 401.500 845.200 400 C844 396 843.600 390 843.900 385.100 C844.500 376 846.500 368 849.500 361Z" fill="#fce6da" stroke="#5a4a42" stroke-width=".7"/>
<path d="M847 388 L846.500 399 M850 389 L849 399" stroke="#8a766c" stroke-width=".5" fill="none"/>
<!-- right hand -->
<path d="M999.600 364.200 L1012.700 357 C1017 364 1020.500 372 1022.500 380 C1024.500 387 1026 393 1026.200 396.500 C1025 398.500 1023 398.800 1021.500 398 C1019.500 398.800 1017.500 398.500 1016 397 L1012.700 395.600 C1011 391 1009 387 1007 384 C1005 381 1003.800 379 1003.600 377.300 C1002 373 1000.500 368.500 999.600 364.200Z" fill="#fce6da" stroke="#5a4a42" stroke-width=".7"/>
<path d="M1012 383 L1016.500 396 M1016 382 L1021.500 397" stroke="#8a766c" stroke-width=".5" fill="none"/>
<!-- shirt cuffs -->
<path d="M846.500 357.600 L864.900 364.200 L864.500 366.800 L846 360Z" fill="#c8d4e8"/>
<path d="M998.300 364.200 L1014 355 L1015 357.200 L999.500 366.500Z" fill="#c8d4e8"/>
<!-- left arm -->
<path d="M902.800 233.300 C897 236 892 238.500 887.100 241.200 C883 244 880.500 247.500 879.300 251.600 L868.800 283 L855.700 324.900 L846.500 357.600 L864.900 364.200 L871.400 343.200 L888.400 309.200 L900 291 L906 250Z" fill="#202020" stroke="#0a0a0a" stroke-width=".7"/>
<path d="M850 345 L868.500 352" stroke="#080808" stroke-width=".7" fill="none"/>
<!-- right arm -->
<path d="M955.200 233.300 C960 236 965 239.500 968.200 243.800 C972 248 974.500 253.500 976.100 259.500 L986.600 293.500 L1007.500 338 L1014 355 L998.300 364.200 L986.600 340.600 L966 296 L958 250Z" fill="#202020" stroke="#0a0a0a" stroke-width=".7"/>
<path d="M994 352.500 L1010.500 343.500" stroke="#080808" stroke-width=".7" fill="none"/>
<!-- neck -->
<path d="M926 211 L951 220 L951 234 L938 240 L922 224Z" fill="#f6d8c8"/>
<!-- jacket body -->
<path d="M918.500 222.900 L902.800 233.300 C899 242 898 252 898.500 262 L898.900 293.500 L901.500 332.800 L900.200 372 L900.700 379.900 L918.500 374.600 L939.500 369.400 L944.700 369.400 L959.100 376 L960.900 345.900 L963 319.700 L968.200 293.500 L966 250 L955.200 233.300 L948.600 226.800 L944 262Z" fill="#1c1c1c" stroke="#0a0a0a" stroke-width=".7"/>
<path d="M940.800 284 C938.500 305 940 340 944.700 369" stroke="#080808" stroke-width=".8" fill="none"/>
<path d="M900 291 C899 275 900 258 904 246 M966.500 293 C966.500 276 964.500 258 960 246" stroke="#0a0a0a" stroke-width=".6" fill="none"/>
<!-- shirt + collar + tie -->
<path d="M921.100 224.200 L938.100 238.600 L947.300 238.600 L948.600 228 L951.500 246.400 L946 266 L934.200 243.800Z" fill="#fff"/>
<path d="M921 223 L923.500 220.500 L930 226 L925 227Z M947 227 L950.500 224.500 L951 229Z" fill="#90a8d4"/>
<path d="M938.100 238.600 L947.300 238.600 L946 244 L947.800 258.200 L944.700 263 L940.800 254.300 L940.500 244Z" fill="#ac0f18" stroke="#5a0508" stroke-width=".5"/>
<path d="M938.100 238.600 L947.300 238.600 L946 244 L940.500 244Z" fill="#c21820"/>
<!-- lapels -->
<path d="M918.500 222.900 L910.700 229.400 L918.500 249 L932.900 254.300 L929 264.700 L944.700 271.300 L940.800 254.300 L934.200 243.800 L921.100 224.200Z" fill="#222" stroke="#5c5c5c" stroke-width=".6"/>
<path d="M948.600 226.800 L963 241.200 L957.800 254.300 L961.700 263.400 L940.800 284.400 L944.700 271.300 L946 266 L951.500 246.400Z" fill="#222" stroke="#5c5c5c" stroke-width=".6"/>
<!-- buttons -->
<g fill="#e2b416" stroke="#6a4a04" stroke-width=".3"><circle cx="941.500" cy="288.300" r="1.200"/><circle cx="953.800" cy="289.100" r="1.200"/><circle cx="942" cy="315.300" r="1.200"/><circle cx="953.600" cy="315.700" r="1.200"/><circle cx="943.700" cy="342.400" r="1.200"/><circle cx="954" cy="342.800" r="1.200"/><circle cx="860.300" cy="351.500" r="1.100"/><circle cx="858.800" cy="356.700" r="1.100"/></g>
<!-- face -->
<path d="M929 167 L961.500 167 L962.500 176 C964 186 964.500 196 963 204 C961 212 957 218 951 221 L945 221.500 C936 220 929 216 925.500 212 C923 205 922 198 922 194Z" fill="#fde8dc" stroke="#5a4a42" stroke-width=".6"/>
<path d="M937 180.500 C941 179 946 179 950 180.500" stroke="#8a7a5a" stroke-width=".7" fill="none"/>
<path d="M951.500 209.500 L955.500 209" stroke="#6a4a42" stroke-width=".7"/>
<!-- hair -->
<path d="M962 171 L962.300 165.500 L960 161.500 C954 156 945 153 935.500 153 C922 153 911 160 908 172 C906 182 907.500 192 910 199 C913 208 918 214 924.500 219 L925 210 C923 204 922 199 922 194 C925 186 928 178 931 172.500 C932.500 170 934 169 936 169 L960 171.500Z" fill="#d9cb8e" stroke="#4a4428" stroke-width=".7"/>
<path d="M914 175 C918 165 926 159 938 157 M911 186 C913 176 917 170 922 166" stroke="#c2b474" stroke-width="1" fill="none"/>
<!-- ear -->
<path d="M913 189 C910.500 190 910 196 912 200 C914 203 917 204 918 202 L918.500 192 C917 189 915 188.500 913 189Z" fill="#fde8dc" stroke="#5a4a42" stroke-width=".6"/>
<!-- glasses -->
<path d="M922.400 186.800 L939 188.800 L939 192.500 L922.400 190.200Z" fill="#141414"/>
<path d="M939 186 C945 184 954 184.500 959 187 L959 197 C956 201 946 201.500 941 199 C939 196 938 190 939 186Z" fill="url(#glens)" stroke="#0a0a0a" stroke-width="1.200"/>
<path d="M959 188 C962 187 966 187.500 968.300 189 L967.800 201 C966 204 962 204 959.500 201.500Z" fill="url(#glens)" stroke="#0a0a0a" stroke-width="1.200"/>
</g>
</svg>
<div class="btn" style="left:868px;top:626px;width:114px;height:25px;"></div>
<span class="t" style="left:900.00px;top:632.84px;font:normal 12px 'Liberation Sans',sans-serif;line-height:1;color:#555;letter-spacing:-0.403px;">Save As...</span>
<div class="btn" style="left:991px;top:626px;width:83px;height:25px;"></div>
<span class="t" style="left:1015.50px;top:632.84px;font:normal 12px 'Liberation Sans',sans-serif;line-height:1;color:#000;letter-spacing:-0.480px;">Save...</span>
<div class="btn" style="left:1084px;top:626px;width:83px;height:25px;"></div>
<span class="t" style="left:1111.00px;top:632.84px;font:normal 12px 'Liberation Sans',sans-serif;line-height:1;color:#000;letter-spacing:-0.338px;">Close</span>
</body></html>
